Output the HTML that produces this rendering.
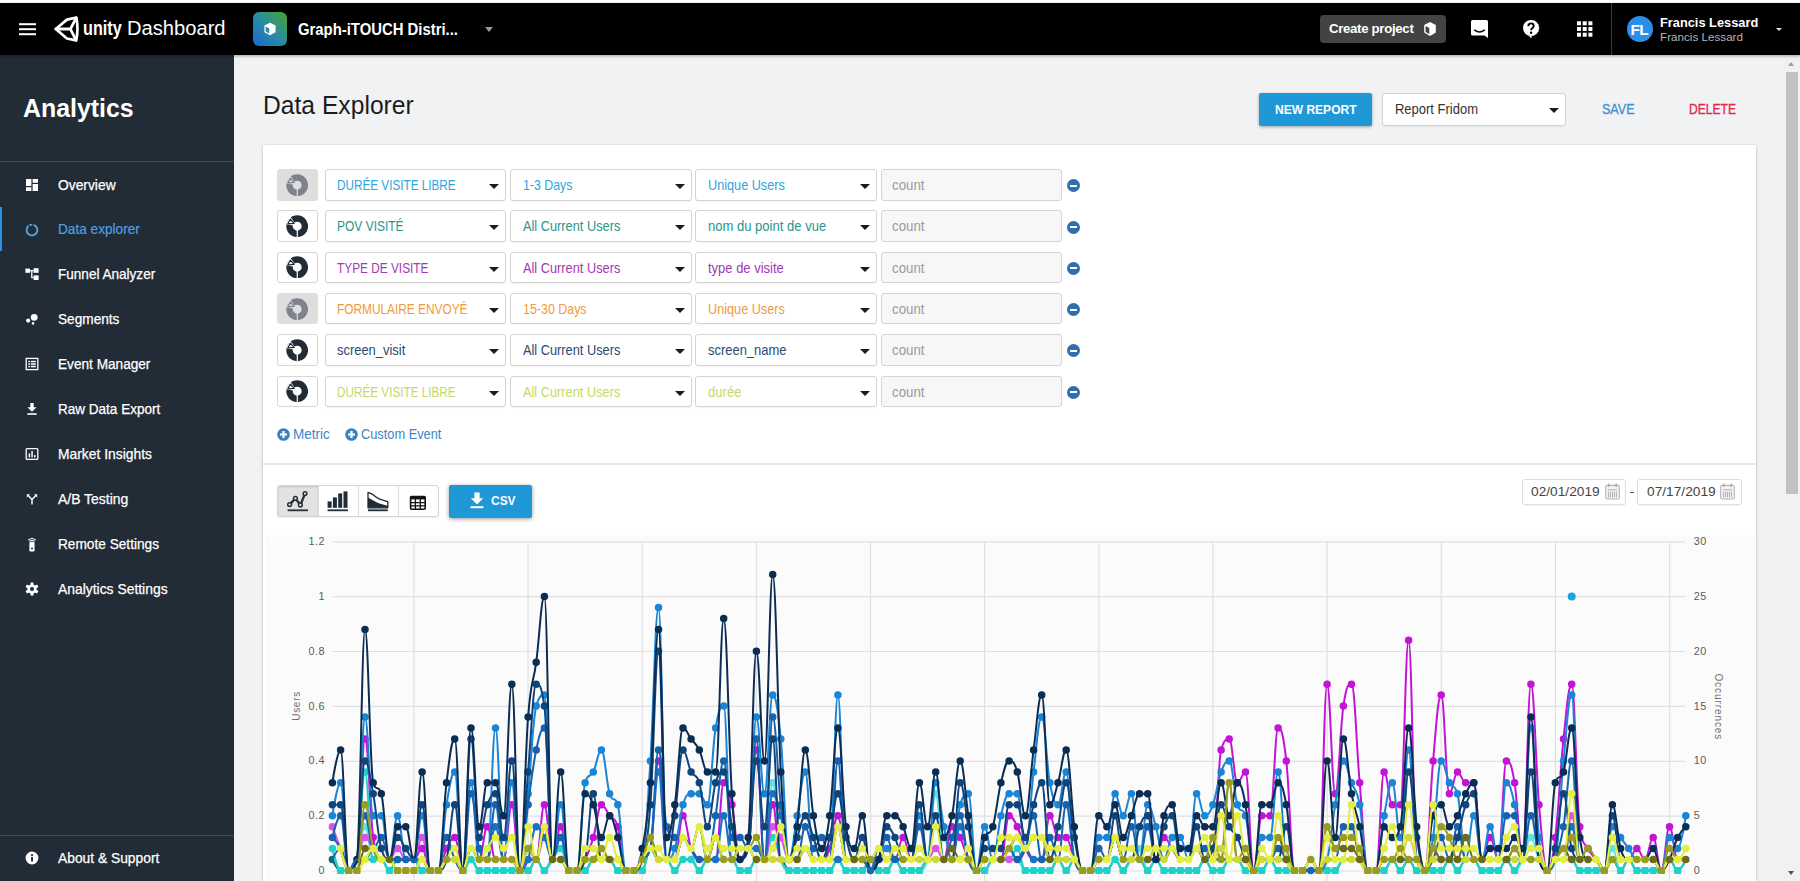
<!DOCTYPE html>
<html lang="en">
<head>
<meta charset="utf-8">
<title>Unity Dashboard - Data Explorer</title>
<style>
*{box-sizing:border-box;margin:0;padding:0}
html,body{width:1800px;height:881px;overflow:hidden;background:#f1f2f4;font-family:"Liberation Sans",sans-serif;}
body{position:relative;color:#212121}
.abs{position:absolute}
/* top */
#topstrip{left:0;top:0;width:1800px;height:3px;background:#fff}
#header{left:0;top:2.5px;width:1800px;height:52.5px;background:#000;box-shadow:0 1px 3px rgba(0,0,0,.35)}
#header .t{position:absolute;color:#fff;white-space:nowrap}
/* sidebar */
#sidebar{left:0;top:55px;width:234px;height:826px;background:#222c37}
#sidebar .item{position:absolute;left:58px;color:#fff;font-size:14.3px;white-space:nowrap;line-height:16px;-webkit-text-stroke:.25px #fff}
#sidebar .ico{position:absolute;left:24px;width:16px;height:16px}
#sidebar .hr{position:absolute;left:0;width:234px;height:1px;background:#3e4853}
/* main */
.card{left:263px;top:145px;width:1493px;height:760px;background:#fff;box-shadow:0 1px 3px rgba(0,0,0,.22),0 0 1px rgba(0,0,0,.12)}
.sel{position:absolute;height:32px;border:1px solid #d4d4d4;border-radius:3px;background:#fff;font-size:14.4px;line-height:30px;padding-left:12px;white-space:nowrap;box-shadow:0 1px 1px rgba(0,0,0,.05)}
.sel:after{content:"";position:absolute;right:6px;top:14px;border-left:5px solid transparent;border-right:5px solid transparent;border-top:5px solid #1c1c1c}
.cnt{position:absolute;height:32px;width:181px;left:880px;border:1px solid #d4d4d4;border-radius:3px;background:#f7f7f7;font-size:14.4px;line-height:30px;padding-left:12px;color:#9a9a9a}
.ibox{position:absolute;left:277px;width:41px;height:32px;border:1px solid #d6d6d6;border-radius:3px;background:#fff}
.ibox.off{background:#dedede;border-color:#dedede}
.minus{position:absolute;left:1066px;width:13px;height:13px;border-radius:50%;background:#2f6fb0}
.minus:after{content:"";position:absolute;left:3px;top:5.5px;width:7px;height:2px;background:#fff}
.ax{font-family:"Liberation Sans",sans-serif;font-size:10.8px;fill:#5a5a5a;letter-spacing:.5px}
</style>
</head>
<body>
<div class="abs" style="left:263px;top:89px;font-size:25.4px;line-height:32px;color:#1c1c1c;white-space:nowrap"><span style="display:inline-block;transform:scaleX(0.971);transform-origin:0 0">Data Explorer</span></div>
<div class="abs" style="left:1259px;top:93px;width:113px;height:33px;background:#1f98d8;border-radius:2px;box-shadow:0 1px 3px rgba(0,0,0,.35)"></div>
<div class="abs" style="left:1274.5px;top:101.7px;font-size:13.6px;line-height:16px;font-weight:bold;color:#fff;white-space:nowrap"><span style="display:inline-block;transform:scaleX(0.885);transform-origin:0 0">NEW REPORT</span></div>
<div class="sel" style="left:1382px;top:93px;width:183.5px;height:33px;line-height:31px;color:#333;padding-left:11.5px;font-size:14.2px"><span style="display:inline-block;transform:scaleX(0.915);transform-origin:0 0">Report Fridom</span></div>
<div class="abs" style="left:1601.5px;top:102px;font-size:13.8px;line-height:16px;color:#3d8fd1;white-space:nowrap;-webkit-text-stroke:.3px #3d8fd1"><span style="display:inline-block;transform:scaleX(0.908);transform-origin:0 0">SAVE</span></div>
<div class="abs" style="left:1689px;top:102px;font-size:13.8px;line-height:16px;color:#e0284f;white-space:nowrap;-webkit-text-stroke:.3px #e0284f"><span style="display:inline-block;transform:scaleX(0.876);transform-origin:0 0">DELETE</span></div>
<div class="abs card"></div>
<div class="ibox off" style="top:169.2px;height:31.4px"><svg style="position:absolute;left:7.8px;top:3.5px" width="22.4" height="22.4" viewBox="0 0 23 23"><circle cx="11.5" cy="11.5" r="7.9" fill="none" stroke="#7d838b" stroke-width="6.6"/><path d="M11.5 11.5 L0 9.6 L4.2 1.2 Z" fill="#dedede"/><path d="M1.9 9.0 L4.5 4.4 L8.4 8.6 Z" fill="none" stroke="#7d838b" stroke-width="1.3" stroke-linejoin="round"/><rect x="11" y="15" width="1.2" height="8" fill="#dedede"/></svg></div>
<div class="sel" style="left:324.5px;top:169.2px;width:181.5px;height:31.4px;line-height:30.4px;color:#2fa4dd;padding-left:11.3px"><span style="display:inline-block;transform:scaleX(0.815);transform-origin:0 0">DURÉE VISITE LIBRE</span></div>
<div class="sel" style="left:510.3px;top:169.2px;width:181.3px;height:31.4px;line-height:30.4px;color:#2fa4dd;padding-left:11.3px"><span style="display:inline-block;transform:scaleX(0.858);transform-origin:0 0">1-3 Days</span></div>
<div class="sel" style="left:695.3px;top:169.2px;width:181.3px;height:31.4px;line-height:30.4px;color:#2fa4dd;padding-left:11.3px"><span style="display:inline-block;transform:scaleX(0.881);transform-origin:0 0">Unique Users</span></div>
<div class="cnt" style="left:880.5px;top:169.2px;height:31.4px;line-height:30.4px;width:181.3px;padding-left:10.6px"><span style="display:inline-block;transform:scaleX(0.923);transform-origin:0 0">count</span></div>
<div class="minus" style="left:1066.6px;top:179.3px"></div>
<div class="ibox" style="top:210.4px;height:31.4px"><svg style="position:absolute;left:7.8px;top:3.5px" width="22.4" height="22.4" viewBox="0 0 23 23"><circle cx="11.5" cy="11.5" r="7.9" fill="none" stroke="#222c37" stroke-width="6.6"/><path d="M11.5 11.5 L0 9.6 L4.2 1.2 Z" fill="#fff"/><path d="M1.9 9.0 L4.5 4.4 L8.4 8.6 Z" fill="none" stroke="#222c37" stroke-width="1.3" stroke-linejoin="round"/><rect x="11" y="15" width="1.2" height="8" fill="#fff"/></svg></div>
<div class="sel" style="left:324.5px;top:210.4px;width:181.5px;height:31.4px;line-height:30.4px;color:#2b958a;padding-left:11.3px"><span style="display:inline-block;transform:scaleX(0.833);transform-origin:0 0">POV VISITÉ</span></div>
<div class="sel" style="left:510.3px;top:210.4px;width:181.3px;height:31.4px;line-height:30.4px;color:#2b958a;padding-left:11.3px"><span style="display:inline-block;transform:scaleX(0.888);transform-origin:0 0">All Current Users</span></div>
<div class="sel" style="left:695.3px;top:210.4px;width:181.3px;height:31.4px;line-height:30.4px;color:#2b958a;padding-left:11.3px"><span style="display:inline-block;transform:scaleX(0.906);transform-origin:0 0">nom du point de vue</span></div>
<div class="cnt" style="left:880.5px;top:210.4px;height:31.4px;line-height:30.4px;width:181.3px;padding-left:10.6px"><span style="display:inline-block;transform:scaleX(0.923);transform-origin:0 0">count</span></div>
<div class="minus" style="left:1066.6px;top:220.5px"></div>
<div class="ibox" style="top:251.7px;height:31.4px"><svg style="position:absolute;left:7.8px;top:3.5px" width="22.4" height="22.4" viewBox="0 0 23 23"><circle cx="11.5" cy="11.5" r="7.9" fill="none" stroke="#222c37" stroke-width="6.6"/><path d="M11.5 11.5 L0 9.6 L4.2 1.2 Z" fill="#fff"/><path d="M1.9 9.0 L4.5 4.4 L8.4 8.6 Z" fill="none" stroke="#222c37" stroke-width="1.3" stroke-linejoin="round"/><rect x="11" y="15" width="1.2" height="8" fill="#fff"/></svg></div>
<div class="sel" style="left:324.5px;top:251.7px;width:181.5px;height:31.4px;line-height:30.4px;color:#a238b6;padding-left:11.3px"><span style="display:inline-block;transform:scaleX(0.823);transform-origin:0 0">TYPE DE VISITE</span></div>
<div class="sel" style="left:510.3px;top:251.7px;width:181.3px;height:31.4px;line-height:30.4px;color:#a238b6;padding-left:11.3px"><span style="display:inline-block;transform:scaleX(0.888);transform-origin:0 0">All Current Users</span></div>
<div class="sel" style="left:695.3px;top:251.7px;width:181.3px;height:31.4px;line-height:30.4px;color:#a238b6;padding-left:11.3px"><span style="display:inline-block;transform:scaleX(0.902);transform-origin:0 0">type de visite</span></div>
<div class="cnt" style="left:880.5px;top:251.7px;height:31.4px;line-height:30.4px;width:181.3px;padding-left:10.6px"><span style="display:inline-block;transform:scaleX(0.923);transform-origin:0 0">count</span></div>
<div class="minus" style="left:1066.6px;top:261.8px"></div>
<div class="ibox off" style="top:293.0px;height:31.4px"><svg style="position:absolute;left:7.8px;top:3.5px" width="22.4" height="22.4" viewBox="0 0 23 23"><circle cx="11.5" cy="11.5" r="7.9" fill="none" stroke="#7d838b" stroke-width="6.6"/><path d="M11.5 11.5 L0 9.6 L4.2 1.2 Z" fill="#dedede"/><path d="M1.9 9.0 L4.5 4.4 L8.4 8.6 Z" fill="none" stroke="#7d838b" stroke-width="1.3" stroke-linejoin="round"/><rect x="11" y="15" width="1.2" height="8" fill="#dedede"/></svg></div>
<div class="sel" style="left:324.5px;top:293.0px;width:181.5px;height:31.4px;line-height:30.4px;color:#f09a3e;padding-left:11.3px"><span style="display:inline-block;transform:scaleX(0.824);transform-origin:0 0">FORMULAIRE ENVOYÉ</span></div>
<div class="sel" style="left:510.3px;top:293.0px;width:181.3px;height:31.4px;line-height:30.4px;color:#f09a3e;padding-left:11.3px"><span style="display:inline-block;transform:scaleX(0.864);transform-origin:0 0">15-30 Days</span></div>
<div class="sel" style="left:695.3px;top:293.0px;width:181.3px;height:31.4px;line-height:30.4px;color:#f09a3e;padding-left:11.3px"><span style="display:inline-block;transform:scaleX(0.881);transform-origin:0 0">Unique Users</span></div>
<div class="cnt" style="left:880.5px;top:293.0px;height:31.4px;line-height:30.4px;width:181.3px;padding-left:10.6px"><span style="display:inline-block;transform:scaleX(0.923);transform-origin:0 0">count</span></div>
<div class="minus" style="left:1066.6px;top:303.1px"></div>
<div class="ibox" style="top:334.2px;height:31.4px"><svg style="position:absolute;left:7.8px;top:3.5px" width="22.4" height="22.4" viewBox="0 0 23 23"><circle cx="11.5" cy="11.5" r="7.9" fill="none" stroke="#222c37" stroke-width="6.6"/><path d="M11.5 11.5 L0 9.6 L4.2 1.2 Z" fill="#fff"/><path d="M1.9 9.0 L4.5 4.4 L8.4 8.6 Z" fill="none" stroke="#222c37" stroke-width="1.3" stroke-linejoin="round"/><rect x="11" y="15" width="1.2" height="8" fill="#fff"/></svg></div>
<div class="sel" style="left:324.5px;top:334.2px;width:181.5px;height:31.4px;line-height:30.4px;color:#2b4a70;padding-left:11.3px"><span style="display:inline-block;transform:scaleX(0.898);transform-origin:0 0">screen_visit</span></div>
<div class="sel" style="left:510.3px;top:334.2px;width:181.3px;height:31.4px;line-height:30.4px;color:#2b4a70;padding-left:11.3px"><span style="display:inline-block;transform:scaleX(0.888);transform-origin:0 0">All Current Users</span></div>
<div class="sel" style="left:695.3px;top:334.2px;width:181.3px;height:31.4px;line-height:30.4px;color:#2b4a70;padding-left:11.3px"><span style="display:inline-block;transform:scaleX(0.900);transform-origin:0 0">screen_name</span></div>
<div class="cnt" style="left:880.5px;top:334.2px;height:31.4px;line-height:30.4px;width:181.3px;padding-left:10.6px"><span style="display:inline-block;transform:scaleX(0.923);transform-origin:0 0">count</span></div>
<div class="minus" style="left:1066.6px;top:344.3px"></div>
<div class="ibox" style="top:375.5px;height:31.4px"><svg style="position:absolute;left:7.8px;top:3.5px" width="22.4" height="22.4" viewBox="0 0 23 23"><circle cx="11.5" cy="11.5" r="7.9" fill="none" stroke="#222c37" stroke-width="6.6"/><path d="M11.5 11.5 L0 9.6 L4.2 1.2 Z" fill="#fff"/><path d="M1.9 9.0 L4.5 4.4 L8.4 8.6 Z" fill="none" stroke="#222c37" stroke-width="1.3" stroke-linejoin="round"/><rect x="11" y="15" width="1.2" height="8" fill="#fff"/></svg></div>
<div class="sel" style="left:324.5px;top:375.5px;width:181.5px;height:31.4px;line-height:30.4px;color:#c6d962;padding-left:11.3px"><span style="display:inline-block;transform:scaleX(0.815);transform-origin:0 0">DURÉE VISITE LIBRE</span></div>
<div class="sel" style="left:510.3px;top:375.5px;width:181.3px;height:31.4px;line-height:30.4px;color:#c6d962;padding-left:11.3px"><span style="display:inline-block;transform:scaleX(0.888);transform-origin:0 0">All Current Users</span></div>
<div class="sel" style="left:695.3px;top:375.5px;width:181.3px;height:31.4px;line-height:30.4px;color:#c6d962;padding-left:11.3px"><span style="display:inline-block;transform:scaleX(0.910);transform-origin:0 0">durée</span></div>
<div class="cnt" style="left:880.5px;top:375.5px;height:31.4px;line-height:30.4px;width:181.3px;padding-left:10.6px"><span style="display:inline-block;transform:scaleX(0.923);transform-origin:0 0">count</span></div>
<div class="minus" style="left:1066.6px;top:385.6px"></div>
<svg class="abs" style="left:276.8px;top:428px" width="13" height="13" viewBox="0 0 13 13"><circle cx="6.5" cy="6.5" r="6.3" fill="#3a7fc2"/><rect x="3" y="5.4" width="7" height="2.2" fill="#fff"/><rect x="5.4" y="3" width="2.2" height="7" fill="#fff"/></svg>
<div class="abs" style="left:293px;top:426px;font-size:14px;line-height:17px;color:#3d86c8;white-space:nowrap"><span style="display:inline-block;transform:scaleX(0.963);transform-origin:0 0">Metric</span></div>
<svg class="abs" style="left:345.0px;top:428px" width="13" height="13" viewBox="0 0 13 13"><circle cx="6.5" cy="6.5" r="6.3" fill="#3a7fc2"/><rect x="3" y="5.4" width="7" height="2.2" fill="#fff"/><rect x="5.4" y="3" width="2.2" height="7" fill="#fff"/></svg>
<div class="abs" style="left:361.3px;top:426px;font-size:14px;line-height:17px;color:#3d86c8;white-space:nowrap"><span style="display:inline-block;transform:scaleX(0.914);transform-origin:0 0">Custom Event</span></div>
<div class="abs" style="left:263px;top:463px;width:1493px;height:2px;background:#e6e6e6"></div>
<div class="abs" style="left:277px;top:485px;width:161.5px;height:32px;border:1px solid #d4d4d4;border-radius:3px;background:#fff;box-shadow:0 1px 1px rgba(0,0,0,.06)"></div>
<div class="abs" style="left:278px;top:486px;width:39.5px;height:30px;background:#e2e2e2;border-radius:2px 0 0 2px;box-shadow:inset 0 1px 2px rgba(0,0,0,.12)"></div>
<div class="abs" style="left:317.5px;top:486px;width:1px;height:30px;background:#dcdcdc"></div>
<div class="abs" style="left:357.5px;top:486px;width:1px;height:30px;background:#dcdcdc"></div>
<div class="abs" style="left:398.0px;top:486px;width:1px;height:30px;background:#dcdcdc"></div>
<svg class="abs" style="left:286px;top:489px" width="24" height="24" viewBox="0 0 24 24"><path d="M3.6 15.6 L9.4 9.4 L14.4 16 L19 4.6" fill="none" stroke="#2b2f36" stroke-width="2.3" stroke-linejoin="round"/><g fill="#e2e2e2" stroke="#2b2f36" stroke-width="1.5"><circle cx="3.6" cy="15.6" r="1.9"/><circle cx="9.4" cy="9.4" r="1.9"/><circle cx="14.4" cy="16" r="1.9"/><circle cx="19" cy="4.6" r="1.9"/></g><rect x="1.6" y="20.4" width="20.4" height="1.8" fill="#2b2f36"/></svg>
<svg class="abs" style="left:326px;top:489px" width="24" height="24" viewBox="0 0 24 24"><g fill="#222c37"><rect x="1.6" y="12.4" width="4" height="6.4"/><rect x="6.9" y="8.4" width="4" height="10.4"/><rect x="12.2" y="4.4" width="4" height="14.4"/><rect x="17.5" y="2.4" width="4" height="16.4"/><rect x="1.6" y="20.4" width="20.4" height="1.8"/></g></svg>
<svg class="abs" style="left:366px;top:489px" width="24" height="24" viewBox="0 0 24 24"><path d="M2 3.4 C6 4.6 8 6.2 10.4 8.2 C13.4 10.8 17.8 11 21.8 12.6 V18.8 H2 Z" fill="none" stroke="#222c37" stroke-width="1.3" stroke-linejoin="round"/><path d="M2 8.4 C5 10 8 11.8 11 13.6 C14 15.2 18 15.6 21.8 16.8 V18.8 H2 Z" fill="#222c37"/><rect x="2" y="20.4" width="19.8" height="1.8" fill="#222c37"/></svg>
<svg class="abs" style="left:408px;top:494px" width="20" height="18" viewBox="0 0 20 18"><rect x="2.6" y="2.6" width="14.6" height="12.6" rx="1" fill="#fff" stroke="#111" stroke-width="1.6"/><rect x="2.6" y="2.6" width="14.6" height="2.8" fill="#111"/><path d="M2.6 8.6 H17.2 M2.6 11.9 H17.2 M7.4 5 V15.2 M12.3 5 V15.2" stroke="#111" stroke-width="1.3" fill="none"/></svg>
<div class="abs" style="left:449px;top:484.6px;width:82.6px;height:33px;background:#1f98d8;border-radius:2px;box-shadow:0 1px 4px rgba(0,0,0,.4)"></div>
<svg class="abs" style="left:469.5px;top:492px" width="14" height="17" viewBox="0 0 14 17"><path d="M4.4 0.6 H9.6 V6.2 H13.2 L7 12.4 L0.8 6.2 H4.4 Z" fill="#fff"/><rect x="0.6" y="14.2" width="12.8" height="2" fill="#fff"/></svg>
<div class="abs" style="left:491.3px;top:493px;font-size:13.6px;line-height:16px;font-weight:bold;color:#fff;white-space:nowrap"><span style="display:inline-block;transform:scaleX(0.880);transform-origin:0 0">CSV</span></div>
<div class="abs" style="left:1522.0px;top:479.2px;width:104.3px;height:25.6px;border:1px solid #dedede;border-radius:3px;background:#fff;box-shadow:0 1px 1px rgba(0,0,0,.05)"></div>
<div class="abs" style="left:1531.3px;top:484px;font-size:13.2px;line-height:16px;color:#444;white-space:nowrap"><span style="display:inline-block;transform:scaleX(1.041);transform-origin:0 0">02/01/2019</span></div>
<svg class="abs" style="left:1605.3px;top:483px" width="15" height="17" viewBox="0 0 15 17"><rect x="0.7" y="2.4" width="13.6" height="13.6" rx="1.6" fill="#f3f3f3" stroke="#b4b4b4" stroke-width="1.1"/><path d="M3.8 0.6 V4 M11.2 0.6 V4" stroke="#a8a8a8" stroke-width="1.3"/><path d="M3 6.8 H12 M3.6 8.6 V14.4 M5.6 8.6 V14.4 M7.5 8.6 V14.4 M9.4 8.6 V14.4 M11.4 8.6 V14.4" stroke="#b0b0b0" stroke-width="1" fill="none"/></svg>
<div class="abs" style="left:1637.3px;top:479.2px;width:104.3px;height:25.6px;border:1px solid #dedede;border-radius:3px;background:#fff;box-shadow:0 1px 1px rgba(0,0,0,.05)"></div>
<div class="abs" style="left:1646.6px;top:484px;font-size:13.2px;line-height:16px;color:#444;white-space:nowrap"><span style="display:inline-block;transform:scaleX(1.041);transform-origin:0 0">07/17/2019</span></div>
<svg class="abs" style="left:1720.4px;top:483px" width="15" height="17" viewBox="0 0 15 17"><rect x="0.7" y="2.4" width="13.6" height="13.6" rx="1.6" fill="#f3f3f3" stroke="#b4b4b4" stroke-width="1.1"/><path d="M3.8 0.6 V4 M11.2 0.6 V4" stroke="#a8a8a8" stroke-width="1.3"/><path d="M3 6.8 H12 M3.6 8.6 V14.4 M5.6 8.6 V14.4 M7.5 8.6 V14.4 M9.4 8.6 V14.4 M11.4 8.6 V14.4" stroke="#b0b0b0" stroke-width="1" fill="none"/></svg>
<div class="abs" style="left:1629.8px;top:491.6px;width:3.8px;height:1.4px;background:#555"></div>
<div class="abs" style="left:264.5px;top:533.5px;width:1490px;height:348px;background:linear-gradient(#fff,#fbfbfb 3px,#fbfbfb)"></div>
<svg class="abs" style="left:0;top:0" width="1800" height="881" viewBox="0 0 1800 881">
<path d="M332.5 871.0 H1685 M332.5 816.1 H1685 M332.5 761.3 H1685 M332.5 706.4 H1685 M332.5 651.5 H1685 M332.5 596.7 H1685 M332.5 541.8 H1685 M413.9 541.5 V881 M528.0 541.5 V881 M642.2 541.5 V881 M756.4 541.5 V881 M870.5 541.5 V881 M984.6 541.5 V881 M1098.8 541.5 V881 M1213.0 541.5 V881 M1327.1 541.5 V881 M1441.2 541.5 V881 M1555.4 541.5 V881 M1669.6 541.5 V881" stroke="#e0e0e3" stroke-width="1.2" fill="none"/>
<text class="ax" x="325" y="873.9" text-anchor="end">0</text>
<text class="ax" x="325" y="819.1" text-anchor="end">0.2</text>
<text class="ax" x="325" y="764.3" text-anchor="end">0.4</text>
<text class="ax" x="325" y="709.5" text-anchor="end">0.6</text>
<text class="ax" x="325" y="654.7" text-anchor="end">0.8</text>
<text class="ax" x="325" y="599.9" text-anchor="end">1</text>
<text class="ax" x="325" y="545.1" text-anchor="end">1.2</text>
<text class="ax" x="1693.8" y="873.9">0</text>
<text class="ax" x="1693.8" y="819.1">5</text>
<text class="ax" x="1693.8" y="764.3">10</text>
<text class="ax" x="1693.8" y="709.5">15</text>
<text class="ax" x="1693.8" y="654.7">20</text>
<text class="ax" x="1693.8" y="599.9">25</text>
<text class="ax" x="1693.8" y="545.1">30</text>
<text class="ax" transform="translate(300 720.8) rotate(-90)" textLength="29.5" style="fill:#707070;font-size:10px">Users</text>
<text class="ax" transform="translate(1714.8 673.4) rotate(90)" textLength="66.4" style="fill:#707070;font-size:10px">Occurrences</text>
<path d="M332.4 859.5C332.4 859.5 337.3 870.5 340.6 870.5H348.7C352.0 870.5 353.6 859.5 356.9 859.5H365.0H373.2H381.3C384.6 859.5 386.2 870.5 389.5 870.5C392.7 870.5 394.4 859.5 397.6 859.5H405.8H413.9C417.2 859.5 418.8 870.5 422.1 870.5H430.2H438.4C441.7 870.5 443.3 859.5 446.5 859.5H454.7C458.0 859.5 459.6 870.5 462.8 870.5C466.1 870.5 467.7 859.5 471.0 859.5C474.3 859.5 475.9 870.5 479.2 870.5H487.3H495.5H503.6H511.8H519.9H528.1C531.3 870.5 533.0 859.5 536.2 859.5C539.5 859.5 541.1 870.5 544.4 870.5C547.6 870.5 549.3 859.5 552.5 859.5H560.7C563.9 859.5 565.6 870.5 568.8 870.5H577.0H585.1C588.4 870.5 590.0 859.5 593.3 859.5H601.4H609.6C612.9 859.5 614.5 870.5 617.8 870.5H625.9H634.1H642.2C645.5 870.5 647.1 848.6 650.4 848.6C653.6 848.6 655.3 859.5 658.5 859.5H666.7C669.9 859.5 671.6 870.5 674.8 870.5C678.1 870.5 679.7 859.5 683.0 859.5H691.1C694.4 859.5 696.0 870.5 699.3 870.5C702.5 870.5 704.2 859.5 707.4 859.5H715.6H723.7H731.9C735.2 859.5 736.8 870.5 740.0 870.5H748.2C751.5 870.5 753.1 859.5 756.4 859.5H764.5H772.7H780.8C784.1 859.5 785.7 870.5 789.0 870.5H797.1H805.3H813.4H821.6H829.7C833.0 870.5 834.6 859.5 837.9 859.5C841.1 859.5 842.8 870.5 846.0 870.5H854.2H862.3C865.6 870.5 867.2 859.5 870.5 859.5C873.8 859.5 875.4 870.5 878.7 870.5H886.8C890.1 870.5 891.7 859.5 895.0 859.5C898.2 859.5 899.8 870.5 903.1 870.5H911.3H919.4C922.7 870.5 924.3 859.5 927.6 859.5H935.7H943.9H952.0H960.2H968.3C971.6 859.5 973.2 870.5 976.5 870.5H984.6C987.9 870.5 989.5 859.5 992.8 859.5H1000.9H1009.1H1017.3C1020.5 859.5 1022.1 870.5 1025.4 870.5H1033.6H1041.7H1049.9C1053.1 870.5 1054.8 859.5 1058.0 859.5C1061.3 859.5 1062.9 870.5 1066.2 870.5C1069.4 870.5 1071.1 859.5 1074.3 859.5C1077.6 859.5 1079.2 870.5 1082.5 870.5H1090.6H1098.8H1106.9C1110.2 870.5 1111.8 859.5 1115.1 859.5C1118.3 859.5 1120.0 870.5 1123.2 870.5C1126.5 870.5 1128.1 859.5 1131.4 859.5H1139.5C1142.8 859.5 1144.4 870.5 1147.7 870.5C1151.0 870.5 1152.6 859.5 1155.9 859.5C1159.1 859.5 1160.7 870.5 1164.0 870.5H1172.2H1180.3H1188.5H1196.6C1199.9 870.5 1201.5 859.5 1204.8 859.5C1208.0 859.5 1209.7 870.5 1212.9 870.5H1221.1C1224.3 870.5 1226.0 859.5 1229.2 859.5H1237.4C1240.6 859.5 1242.3 870.5 1245.5 870.5H1253.7H1261.8C1265.1 870.5 1266.7 859.5 1270.0 859.5C1273.3 859.5 1274.9 870.5 1278.1 870.5H1286.3H1294.5H1302.6C1305.9 870.5 1307.5 859.5 1310.8 859.5C1314.0 859.5 1315.7 870.5 1318.9 870.5H1327.1H1335.2C1338.5 870.5 1340.1 859.5 1343.4 859.5H1351.5H1359.7C1362.9 859.5 1364.6 870.5 1367.8 870.5H1376.0H1384.1C1387.4 870.5 1389.0 859.5 1392.3 859.5C1395.6 859.5 1397.2 870.5 1400.4 870.5C1403.7 870.5 1405.3 859.5 1408.6 859.5C1411.9 859.5 1413.5 870.5 1416.7 870.5H1424.9H1433.1H1441.2C1444.5 870.5 1446.1 859.5 1449.4 859.5C1452.6 859.5 1454.3 870.5 1457.5 870.5C1460.8 870.5 1462.4 859.5 1465.7 859.5H1473.8C1477.1 859.5 1478.7 870.5 1482.0 870.5H1490.1H1498.3C1501.5 870.5 1503.2 859.5 1506.4 859.5C1509.7 859.5 1511.3 870.5 1514.6 870.5C1517.8 870.5 1519.5 859.5 1522.7 859.5H1530.9H1539.0C1542.3 859.5 1543.9 870.5 1547.2 870.5C1550.5 870.5 1552.1 859.5 1555.3 859.5H1563.5H1571.7C1574.9 859.5 1576.5 870.5 1579.8 870.5H1588.0H1596.1H1604.3C1607.5 870.5 1609.2 859.5 1612.4 859.5C1615.7 859.5 1617.3 870.5 1620.6 870.5C1623.8 870.5 1625.5 859.5 1628.7 859.5C1632.0 859.5 1633.6 870.5 1636.9 870.5H1645.0H1653.2H1661.3C1664.6 870.5 1666.2 859.5 1669.5 859.5C1672.8 859.5 1674.4 870.5 1677.6 870.5C1680.9 870.5 1685.8 859.5 1685.8 859.5" fill="none" stroke="#0e6b66" stroke-width="2" stroke-linejoin="round" stroke-linecap="round"/>
<path d="M332.4 859.5h0" fill="none" stroke="#0e6b66" stroke-width="7.5" stroke-linecap="round"/>
<path d="M332.4 848.6C332.4 848.6 337.3 870.5 340.6 870.5H348.7C352.0 870.5 353.6 868.3 356.9 859.5C360.1 850.8 361.8 826.7 365.0 826.7C368.3 826.7 369.9 859.5 373.2 859.5H381.3C384.6 859.5 386.2 870.5 389.5 870.5C392.7 870.5 394.4 859.5 397.6 859.5H405.8H413.9C417.2 859.5 418.8 870.5 422.1 870.5H430.2H438.4C441.7 870.5 443.3 859.5 446.5 859.5H454.7C458.0 859.5 459.6 870.5 462.8 870.5C466.1 870.5 467.7 859.5 471.0 859.5C474.3 859.5 475.9 870.5 479.2 870.5H487.3H495.5H503.6H511.8H519.9H528.1C531.3 870.5 533.0 859.5 536.2 859.5C539.5 859.5 541.1 870.5 544.4 870.5C547.6 870.5 549.3 859.5 552.5 859.5H560.7C563.9 859.5 565.6 870.5 568.8 870.5H577.0H585.1C588.4 870.5 590.0 859.5 593.3 859.5H601.4H609.6C612.9 859.5 614.5 870.5 617.8 870.5H625.9H634.1H642.2C645.5 870.5 647.1 848.6 650.4 848.6C653.6 848.6 655.3 859.5 658.5 859.5H666.7C669.9 859.5 671.6 870.5 674.8 870.5C678.1 870.5 679.7 859.5 683.0 859.5H691.1C694.4 859.5 696.0 870.5 699.3 870.5C702.5 870.5 704.2 859.5 707.4 859.5H715.6H723.7H731.9C735.2 859.5 736.8 870.5 740.0 870.5H748.2C751.5 870.5 753.1 859.5 756.4 859.5H764.5C767.8 859.5 769.4 782.8 772.7 782.8C775.9 782.8 777.6 848.6 780.8 859.5C784.1 870.5 785.7 870.5 789.0 870.5H797.1H805.3H813.4H821.6H829.7C833.0 870.5 834.6 859.5 837.9 859.5C841.1 859.5 842.8 870.5 846.0 870.5H854.2H862.3C865.6 870.5 867.2 859.5 870.5 859.5C873.8 859.5 875.4 870.5 878.7 870.5H886.8C890.1 870.5 891.7 859.5 895.0 859.5C898.2 859.5 899.8 870.5 903.1 870.5H911.3H919.4C922.7 870.5 924.3 870.5 927.6 859.5C930.8 848.6 932.5 793.8 935.7 793.8C939.0 793.8 940.6 859.5 943.9 859.5H952.0H960.2H968.3C971.6 859.5 973.2 870.5 976.5 870.5H984.6C987.9 870.5 989.5 859.5 992.8 859.5H1000.9H1009.1H1017.3C1020.5 859.5 1022.1 870.5 1025.4 870.5H1033.6H1041.7H1049.9C1053.1 870.5 1054.8 859.5 1058.0 859.5C1061.3 859.5 1062.9 870.5 1066.2 870.5C1069.4 870.5 1071.1 859.5 1074.3 859.5C1077.6 859.5 1079.2 870.5 1082.5 870.5H1090.6H1098.8H1106.9C1110.2 870.5 1111.8 859.5 1115.1 859.5C1118.3 859.5 1120.0 870.5 1123.2 870.5C1126.5 870.5 1128.1 863.9 1131.4 859.5C1134.7 855.2 1136.3 848.6 1139.5 848.6C1142.8 848.6 1144.4 870.5 1147.7 870.5C1151.0 870.5 1152.6 859.5 1155.9 859.5C1159.1 859.5 1160.7 870.5 1164.0 870.5H1172.2H1180.3H1188.5H1196.6C1199.9 870.5 1201.5 859.5 1204.8 859.5C1208.0 859.5 1209.7 870.5 1212.9 870.5H1221.1C1224.3 870.5 1226.0 859.5 1229.2 859.5H1237.4C1240.6 859.5 1242.3 870.5 1245.5 870.5H1253.7H1261.8C1265.1 870.5 1266.7 859.5 1270.0 859.5C1273.3 859.5 1274.9 870.5 1278.1 870.5H1286.3H1294.5H1302.6C1305.9 870.5 1307.5 859.5 1310.8 859.5C1314.0 859.5 1315.7 870.5 1318.9 870.5H1327.1H1335.2C1338.5 870.5 1340.1 859.5 1343.4 859.5H1351.5H1359.7C1362.9 859.5 1364.6 870.5 1367.8 870.5H1376.0H1384.1C1387.4 870.5 1389.0 859.5 1392.3 859.5C1395.6 859.5 1397.2 870.5 1400.4 870.5C1403.7 870.5 1405.3 859.5 1408.6 859.5C1411.9 859.5 1413.5 870.5 1416.7 870.5H1424.9H1433.1H1441.2C1444.5 870.5 1446.1 859.5 1449.4 859.5C1452.6 859.5 1454.3 870.5 1457.5 870.5C1460.8 870.5 1462.4 859.5 1465.7 859.5H1473.8C1477.1 859.5 1478.7 870.5 1482.0 870.5H1490.1H1498.3C1501.5 870.5 1503.2 859.5 1506.4 859.5C1509.7 859.5 1511.3 870.5 1514.6 870.5C1517.8 870.5 1519.5 866.1 1522.7 859.5C1526.0 853.0 1527.6 837.6 1530.9 837.6C1534.2 837.6 1535.8 853.0 1539.0 859.5C1542.3 866.1 1543.9 870.5 1547.2 870.5C1550.5 870.5 1552.1 859.5 1555.3 859.5H1563.5H1571.7C1574.9 859.5 1576.5 870.5 1579.8 870.5H1588.0H1596.1H1604.3C1607.5 870.5 1609.2 848.6 1612.4 848.6C1615.7 848.6 1617.3 870.5 1620.6 870.5C1623.8 870.5 1625.5 859.5 1628.7 859.5C1632.0 859.5 1633.6 870.5 1636.9 870.5H1645.0H1653.2H1661.3C1664.6 870.5 1666.2 859.5 1669.5 859.5C1672.8 859.5 1674.4 870.5 1677.6 870.5C1680.9 870.5 1685.8 859.5 1685.8 859.5" fill="none" stroke="#5ee3de" stroke-width="2" stroke-linejoin="round" stroke-linecap="round"/>
<path d="M365.0 826.7h0M772.7 782.8h0M935.7 793.8h0M1139.5 848.6h0M1530.9 837.6h0M1612.4 848.6h0" fill="none" stroke="#5ee3de" stroke-width="7.5" stroke-linecap="round"/>
<path d="M332.4 848.6C332.4 848.6 337.3 870.5 340.6 870.5H348.7C352.0 870.5 353.6 870.5 356.9 859.5C360.1 848.6 361.8 771.9 365.0 771.9C368.3 771.9 369.9 859.5 373.2 859.5H381.3C384.6 859.5 386.2 870.5 389.5 870.5C392.7 870.5 394.4 859.5 397.6 859.5H405.8H413.9C417.2 859.5 418.8 870.5 422.1 870.5H430.2H438.4C441.7 870.5 443.3 859.5 446.5 859.5H454.7C458.0 859.5 459.6 870.5 462.8 870.5C466.1 870.5 467.7 859.5 471.0 859.5C474.3 859.5 475.9 870.5 479.2 870.5H487.3H495.5H503.6H511.8H519.9H528.1C531.3 870.5 533.0 859.5 536.2 859.5C539.5 859.5 541.1 870.5 544.4 870.5C547.6 870.5 549.3 863.9 552.5 859.5C555.8 855.2 557.4 848.6 560.7 848.6C563.9 848.6 565.6 870.5 568.8 870.5H577.0H585.1C588.4 870.5 590.0 859.5 593.3 859.5H601.4H609.6C612.9 859.5 614.5 870.5 617.8 870.5H625.9H634.1H642.2C645.5 870.5 647.1 848.6 650.4 848.6C653.6 848.6 655.3 859.5 658.5 859.5H666.7C669.9 859.5 671.6 870.5 674.8 870.5C678.1 870.5 679.7 859.5 683.0 859.5H691.1C694.4 859.5 696.0 870.5 699.3 870.5C702.5 870.5 704.2 859.5 707.4 859.5H715.6H723.7H731.9C735.2 859.5 736.8 870.5 740.0 870.5H748.2C751.5 870.5 753.1 859.5 756.4 859.5H764.5C767.8 859.5 769.4 837.6 772.7 837.6C775.9 837.6 777.6 853.0 780.8 859.5C784.1 866.1 785.7 870.5 789.0 870.5H797.1H805.3H813.4H821.6H829.7C833.0 870.5 834.6 859.5 837.9 859.5C841.1 859.5 842.8 870.5 846.0 870.5H854.2H862.3C865.6 870.5 867.2 859.5 870.5 859.5C873.8 859.5 875.4 870.5 878.7 870.5H886.8C890.1 870.5 891.7 859.5 895.0 859.5C898.2 859.5 899.8 870.5 903.1 870.5H911.3H919.4C922.7 870.5 924.3 859.5 927.6 859.5H935.7H943.9H952.0H960.2H968.3C971.6 859.5 973.2 870.5 976.5 870.5H984.6C987.9 870.5 989.5 859.5 992.8 859.5H1000.9H1009.1C1012.4 859.5 1014.0 848.6 1017.3 848.6C1020.5 848.6 1022.1 870.5 1025.4 870.5H1033.6H1041.7H1049.9C1053.1 870.5 1054.8 859.5 1058.0 859.5C1061.3 859.5 1062.9 870.5 1066.2 870.5C1069.4 870.5 1071.1 859.5 1074.3 859.5C1077.6 859.5 1079.2 870.5 1082.5 870.5H1090.6H1098.8H1106.9C1110.2 870.5 1111.8 859.5 1115.1 859.5C1118.3 859.5 1120.0 870.5 1123.2 870.5C1126.5 870.5 1128.1 859.5 1131.4 859.5H1139.5C1142.8 859.5 1144.4 870.5 1147.7 870.5C1151.0 870.5 1152.6 859.5 1155.9 859.5C1159.1 859.5 1160.7 870.5 1164.0 870.5H1172.2H1180.3H1188.5H1196.6C1199.9 870.5 1201.5 859.5 1204.8 859.5C1208.0 859.5 1209.7 870.5 1212.9 870.5H1221.1C1224.3 870.5 1226.0 859.5 1229.2 859.5H1237.4C1240.6 859.5 1242.3 870.5 1245.5 870.5H1253.7H1261.8C1265.1 870.5 1266.7 859.5 1270.0 859.5C1273.3 859.5 1274.9 870.5 1278.1 870.5H1286.3H1294.5H1302.6C1305.9 870.5 1307.5 859.5 1310.8 859.5C1314.0 859.5 1315.7 870.5 1318.9 870.5H1327.1H1335.2C1338.5 870.5 1340.1 859.5 1343.4 859.5H1351.5H1359.7C1362.9 859.5 1364.6 870.5 1367.8 870.5H1376.0H1384.1C1387.4 870.5 1389.0 859.5 1392.3 859.5C1395.6 859.5 1397.2 870.5 1400.4 870.5C1403.7 870.5 1405.3 859.5 1408.6 859.5C1411.9 859.5 1413.5 870.5 1416.7 870.5H1424.9H1433.1H1441.2C1444.5 870.5 1446.1 859.5 1449.4 859.5C1452.6 859.5 1454.3 870.5 1457.5 870.5C1460.8 870.5 1462.4 859.5 1465.7 859.5H1473.8C1477.1 859.5 1478.7 870.5 1482.0 870.5H1490.1H1498.3C1501.5 870.5 1503.2 859.5 1506.4 859.5C1509.7 859.5 1511.3 870.5 1514.6 870.5C1517.8 870.5 1519.5 859.5 1522.7 859.5H1530.9H1539.0C1542.3 859.5 1543.9 870.5 1547.2 870.5C1550.5 870.5 1552.1 859.5 1555.3 859.5H1563.5H1571.7C1574.9 859.5 1576.5 870.5 1579.8 870.5H1588.0H1596.1H1604.3C1607.5 870.5 1609.2 859.5 1612.4 859.5C1615.7 859.5 1617.3 870.5 1620.6 870.5C1623.8 870.5 1625.5 859.5 1628.7 859.5C1632.0 859.5 1633.6 870.5 1636.9 870.5H1645.0H1653.2H1661.3C1664.6 870.5 1666.2 859.5 1669.5 859.5C1672.8 859.5 1674.4 870.5 1677.6 870.5C1680.9 870.5 1685.8 859.5 1685.8 859.5" fill="none" stroke="#1fd2c9" stroke-width="2" stroke-linejoin="round" stroke-linecap="round"/>
<path d="M332.4 848.6h0M365.0 771.9h0M373.2 859.5h0M471.0 859.5h0M560.7 848.6h0M683.0 859.5h0M691.1 859.5h0M772.7 837.6h0M927.6 859.5h0M1017.3 848.6h0M1115.1 859.5h0" fill="none" stroke="#1fd2c9" stroke-width="7.5" stroke-linecap="round"/>
<path d="M338.4 868.5h4.4v4h-4.4zM346.5 868.5h4.4v4h-4.4zM387.3 868.5h4.4v4h-4.4zM419.9 868.5h4.4v4h-4.4zM428.0 868.5h4.4v4h-4.4zM436.2 868.5h4.4v4h-4.4zM460.6 868.5h4.4v4h-4.4zM477.0 868.5h4.4v4h-4.4zM485.1 868.5h4.4v4h-4.4zM493.3 868.5h4.4v4h-4.4zM501.4 868.5h4.4v4h-4.4zM509.6 868.5h4.4v4h-4.4zM517.7 868.5h4.4v4h-4.4zM525.9 868.5h4.4v4h-4.4zM542.2 868.5h4.4v4h-4.4zM566.6 868.5h4.4v4h-4.4zM574.8 868.5h4.4v4h-4.4zM582.9 868.5h4.4v4h-4.4zM615.6 868.5h4.4v4h-4.4zM623.7 868.5h4.4v4h-4.4zM631.9 868.5h4.4v4h-4.4zM640.0 868.5h4.4v4h-4.4zM672.6 868.5h4.4v4h-4.4zM697.1 868.5h4.4v4h-4.4zM737.8 868.5h4.4v4h-4.4zM746.0 868.5h4.4v4h-4.4zM786.8 868.5h4.4v4h-4.4zM794.9 868.5h4.4v4h-4.4zM803.1 868.5h4.4v4h-4.4zM811.2 868.5h4.4v4h-4.4zM819.4 868.5h4.4v4h-4.4zM827.5 868.5h4.4v4h-4.4zM843.8 868.5h4.4v4h-4.4zM852.0 868.5h4.4v4h-4.4zM860.1 868.5h4.4v4h-4.4zM876.5 868.5h4.4v4h-4.4zM884.6 868.5h4.4v4h-4.4zM900.9 868.5h4.4v4h-4.4zM909.1 868.5h4.4v4h-4.4zM917.2 868.5h4.4v4h-4.4zM974.3 868.5h4.4v4h-4.4zM982.4 868.5h4.4v4h-4.4zM1023.2 868.5h4.4v4h-4.4zM1031.4 868.5h4.4v4h-4.4zM1039.5 868.5h4.4v4h-4.4zM1047.7 868.5h4.4v4h-4.4zM1064.0 868.5h4.4v4h-4.4zM1080.3 868.5h4.4v4h-4.4zM1088.4 868.5h4.4v4h-4.4zM1096.6 868.5h4.4v4h-4.4zM1104.7 868.5h4.4v4h-4.4zM1121.0 868.5h4.4v4h-4.4zM1145.5 868.5h4.4v4h-4.4zM1161.8 868.5h4.4v4h-4.4zM1170.0 868.5h4.4v4h-4.4zM1178.1 868.5h4.4v4h-4.4zM1186.3 868.5h4.4v4h-4.4zM1194.4 868.5h4.4v4h-4.4zM1210.7 868.5h4.4v4h-4.4zM1218.9 868.5h4.4v4h-4.4zM1243.3 868.5h4.4v4h-4.4zM1251.5 868.5h4.4v4h-4.4zM1259.6 868.5h4.4v4h-4.4zM1275.9 868.5h4.4v4h-4.4zM1284.1 868.5h4.4v4h-4.4zM1292.3 868.5h4.4v4h-4.4zM1300.4 868.5h4.4v4h-4.4zM1316.7 868.5h4.4v4h-4.4zM1324.9 868.5h4.4v4h-4.4zM1333.0 868.5h4.4v4h-4.4zM1365.6 868.5h4.4v4h-4.4zM1373.8 868.5h4.4v4h-4.4zM1381.9 868.5h4.4v4h-4.4zM1398.2 868.5h4.4v4h-4.4zM1414.5 868.5h4.4v4h-4.4zM1422.7 868.5h4.4v4h-4.4zM1430.9 868.5h4.4v4h-4.4zM1439.0 868.5h4.4v4h-4.4zM1455.3 868.5h4.4v4h-4.4zM1479.8 868.5h4.4v4h-4.4zM1487.9 868.5h4.4v4h-4.4zM1496.1 868.5h4.4v4h-4.4zM1512.4 868.5h4.4v4h-4.4zM1545.0 868.5h4.4v4h-4.4zM1577.6 868.5h4.4v4h-4.4zM1585.8 868.5h4.4v4h-4.4zM1593.9 868.5h4.4v4h-4.4zM1602.1 868.5h4.4v4h-4.4zM1618.4 868.5h4.4v4h-4.4zM1634.7 868.5h4.4v4h-4.4zM1642.8 868.5h4.4v4h-4.4zM1651.0 868.5h4.4v4h-4.4zM1659.1 868.5h4.4v4h-4.4zM1675.4 868.5h4.4v4h-4.4z" fill="#1fd2c9" stroke="#1fd2c9" stroke-width="3" stroke-linejoin="round"/>
<path d="M332.4 826.7C332.4 826.7 337.3 839.8 340.6 848.6C343.8 857.3 345.4 870.5 348.7 870.5C352.0 870.5 353.6 866.1 356.9 859.5C360.1 853.0 361.8 837.6 365.0 837.6C368.3 837.6 369.9 844.2 373.2 848.6C376.4 853.0 378.1 859.5 381.3 859.5H389.5C392.7 859.5 394.4 848.6 397.6 848.6C400.9 848.6 402.5 859.5 405.8 859.5H413.9C417.2 859.5 418.8 837.6 422.1 837.6C425.3 837.6 427.0 870.5 430.2 870.5H438.4C441.7 870.5 443.3 859.5 446.5 859.5H454.7C458.0 859.5 459.6 870.5 462.8 870.5C466.1 870.5 467.7 848.6 471.0 848.6C474.3 848.6 475.9 859.5 479.2 859.5H487.3H495.5H503.6H511.8C515.0 859.5 516.7 870.5 519.9 870.5C523.2 870.5 524.8 859.5 528.1 859.5H536.2C539.5 859.5 541.1 837.6 544.4 837.6C547.6 837.6 549.3 859.5 552.5 859.5H560.7C563.9 859.5 565.6 870.5 568.8 870.5H577.0C580.3 870.5 581.9 859.5 585.1 859.5H593.3H601.4H609.6H617.8C621.0 859.5 622.6 870.5 625.9 870.5H634.1C637.3 870.5 639.0 863.9 642.2 859.5C645.5 855.2 647.1 848.6 650.4 848.6C653.6 848.6 655.3 859.5 658.5 859.5H666.7H674.8C678.1 859.5 679.7 837.6 683.0 837.6C686.2 837.6 687.9 844.2 691.1 848.6C694.4 853.0 696.0 859.5 699.3 859.5H707.4H715.6H723.7H731.9H740.0C743.3 859.5 744.9 848.6 748.2 848.6C751.5 848.6 753.1 859.5 756.4 859.5H764.5C767.8 859.5 769.4 826.7 772.7 826.7C775.9 826.7 777.6 831.0 780.8 837.6C784.1 844.2 785.7 859.5 789.0 859.5H797.1C800.4 859.5 802.0 848.6 805.3 848.6C808.5 848.6 810.2 859.5 813.4 859.5H821.6H829.7H837.9H846.0H854.2H862.3H870.5H878.7H886.8H895.0H903.1H911.3H919.4H927.6C930.8 859.5 932.5 848.6 935.7 848.6C939.0 848.6 940.6 859.5 943.9 859.5H952.0H960.2H968.3C971.6 859.5 973.2 870.5 976.5 870.5C979.7 870.5 981.4 859.5 984.6 859.5H992.8H1000.9H1009.1H1017.3C1020.5 859.5 1022.1 848.6 1025.4 848.6C1028.7 848.6 1030.3 859.5 1033.6 859.5H1041.7H1049.9H1058.0H1066.2H1074.3C1077.6 859.5 1079.2 870.5 1082.5 870.5H1090.6C1093.9 870.5 1095.5 859.5 1098.8 859.5H1106.9C1110.2 859.5 1111.8 837.6 1115.1 837.6C1118.3 837.6 1120.0 859.5 1123.2 859.5H1131.4H1139.5H1147.7H1155.9H1164.0C1167.3 859.5 1168.9 848.6 1172.2 848.6C1175.4 848.6 1177.1 859.5 1180.3 859.5H1188.5C1191.7 859.5 1193.4 848.6 1196.6 848.6C1199.9 848.6 1201.5 859.5 1204.8 859.5H1212.9H1221.1H1229.2H1237.4H1245.5C1248.8 859.5 1250.4 870.5 1253.7 870.5C1257.0 870.5 1258.6 859.5 1261.8 859.5H1270.0H1278.1H1286.3C1289.6 859.5 1291.2 870.5 1294.5 870.5H1302.6C1305.9 870.5 1307.5 859.5 1310.8 859.5C1314.0 859.5 1315.7 870.5 1318.9 870.5C1322.2 870.5 1323.8 859.5 1327.1 859.5H1335.2H1343.4H1351.5H1359.7C1362.9 859.5 1364.6 870.5 1367.8 870.5H1376.0C1379.2 870.5 1380.9 859.5 1384.1 859.5H1392.3H1400.4H1408.6H1416.7C1420.0 859.5 1421.6 870.5 1424.9 870.5C1428.2 870.5 1429.8 859.5 1433.1 859.5H1441.2H1449.4H1457.5H1465.7H1473.8H1482.0H1490.1H1498.3H1506.4H1514.6H1522.7H1530.9H1539.0C1542.3 859.5 1543.9 870.5 1547.2 870.5C1550.5 870.5 1552.1 859.5 1555.3 859.5H1563.5C1566.8 859.5 1568.4 815.7 1571.7 815.7C1574.9 815.7 1576.5 859.5 1579.8 859.5H1588.0H1596.1C1599.4 859.5 1601.0 870.5 1604.3 870.5C1607.5 870.5 1609.2 859.5 1612.4 859.5H1620.6H1628.7H1636.9H1645.0H1653.2C1656.4 859.5 1658.1 870.5 1661.3 870.5C1664.6 870.5 1666.2 859.5 1669.5 859.5H1677.6H1685.8" fill="none" stroke="#dc52ea" stroke-width="2" stroke-linejoin="round" stroke-linecap="round"/>
<path d="M332.4 826.7h0M365.0 837.6h0M397.6 848.6h0M422.1 837.6h0M772.7 826.7h0M780.8 837.6h0M935.7 848.6h0M1009.1 859.5h0M1571.7 815.7h0" fill="none" stroke="#dc52ea" stroke-width="7.5" stroke-linecap="round"/>
<path d="M332.4 837.6C332.4 837.6 337.3 842.0 340.6 848.6C343.8 855.2 345.4 870.5 348.7 870.5C352.0 870.5 353.6 870.5 356.9 859.5C360.1 848.6 361.8 739.0 365.0 739.0C368.3 739.0 369.9 815.7 373.2 837.6C376.4 859.5 378.1 859.5 381.3 859.5H389.5H397.6H405.8H413.9C417.2 859.5 418.8 848.6 422.1 848.6C425.3 848.6 427.0 870.5 430.2 870.5H438.4C441.7 870.5 443.3 855.2 446.5 848.6C449.8 842.0 451.4 837.6 454.7 837.6C458.0 837.6 459.6 870.5 462.8 870.5C466.1 870.5 467.7 848.6 471.0 848.6C474.3 848.6 475.9 859.5 479.2 859.5C482.4 859.5 484.0 826.7 487.3 826.7C490.6 826.7 492.2 859.5 495.5 859.5H503.6C506.9 859.5 508.5 804.7 511.8 804.7C515.0 804.7 516.7 870.5 519.9 870.5C523.2 870.5 524.8 859.5 528.1 859.5H536.2C539.5 859.5 541.1 804.7 544.4 804.7C547.6 804.7 549.3 859.5 552.5 859.5C555.8 859.5 557.4 826.7 560.7 826.7C563.9 826.7 565.6 870.5 568.8 870.5H577.0C580.3 870.5 581.9 866.1 585.1 859.5C588.4 853.0 590.0 848.6 593.3 837.6C596.6 826.7 598.2 804.7 601.4 804.7C604.7 804.7 606.3 811.3 609.6 815.7C612.9 820.1 614.5 815.7 617.8 826.7C621.0 837.6 622.6 870.5 625.9 870.5H634.1C637.3 870.5 639.0 863.9 642.2 859.5C645.5 855.2 647.1 859.5 650.4 848.6C653.6 837.6 655.3 760.9 658.5 760.9C661.8 760.9 663.4 859.5 666.7 859.5H674.8C678.1 859.5 679.7 815.7 683.0 815.7C686.2 815.7 687.9 839.8 691.1 848.6C694.4 857.3 696.0 859.5 699.3 859.5H707.4H715.6C718.9 859.5 720.5 782.8 723.7 782.8C727.0 782.8 728.6 789.4 731.9 804.7C735.2 820.1 736.8 859.5 740.0 859.5C743.3 859.5 744.9 859.5 748.2 848.6C751.5 837.6 753.1 749.9 756.4 749.9C759.6 749.9 761.2 859.5 764.5 859.5C767.8 859.5 769.4 804.7 772.7 804.7C775.9 804.7 777.6 859.5 780.8 859.5H789.0H797.1C800.4 859.5 802.0 848.6 805.3 848.6C808.5 848.6 810.2 859.5 813.4 859.5H821.6C824.8 859.5 826.5 857.3 829.7 848.6C833.0 839.8 834.6 815.7 837.9 815.7C841.1 815.7 842.8 859.5 846.0 859.5H854.2H862.3H870.5H878.7H886.8H895.0C898.2 859.5 899.8 837.6 903.1 837.6C906.4 837.6 908.0 859.5 911.3 859.5H919.4H927.6H935.7H943.9C947.1 859.5 948.8 826.7 952.0 826.7C955.3 826.7 956.9 831.0 960.2 837.6C963.4 844.2 965.1 853.0 968.3 859.5C971.6 866.1 973.2 870.5 976.5 870.5C979.7 870.5 981.4 859.5 984.6 859.5H992.8H1000.9C1004.2 859.5 1005.8 815.7 1009.1 815.7C1012.4 815.7 1014.0 820.1 1017.3 826.7C1020.5 833.2 1022.1 842.0 1025.4 848.6C1028.7 855.2 1030.3 859.5 1033.6 859.5H1041.7C1045.0 859.5 1046.6 815.7 1049.9 815.7C1053.1 815.7 1054.8 837.6 1058.0 837.6H1066.2C1069.4 837.6 1071.1 853.0 1074.3 859.5C1077.6 866.1 1079.2 870.5 1082.5 870.5H1090.6C1093.9 870.5 1095.5 859.5 1098.8 859.5H1106.9C1110.2 859.5 1111.8 837.6 1115.1 837.6C1118.3 837.6 1120.0 859.5 1123.2 859.5H1131.4H1139.5H1147.7H1155.9C1159.1 859.5 1160.7 837.6 1164.0 837.6C1167.3 837.6 1168.9 844.2 1172.2 848.6C1175.4 853.0 1177.1 859.5 1180.3 859.5H1188.5C1191.7 859.5 1193.4 848.6 1196.6 848.6C1199.9 848.6 1201.5 859.5 1204.8 859.5H1212.9C1216.2 859.5 1217.8 760.9 1221.1 749.9C1224.3 739.0 1226.0 739.0 1229.2 739.0C1232.5 739.0 1234.1 782.8 1237.4 782.8C1240.6 782.8 1242.3 771.9 1245.5 771.9C1248.8 771.9 1250.4 870.5 1253.7 870.5C1257.0 870.5 1258.6 815.7 1261.8 815.7H1270.0C1273.3 815.7 1274.9 728.0 1278.1 728.0C1281.4 728.0 1283.0 732.4 1286.3 760.9C1289.6 789.4 1291.2 870.5 1294.5 870.5H1302.6C1305.9 870.5 1307.5 859.5 1310.8 859.5C1314.0 859.5 1315.7 870.5 1318.9 870.5C1322.2 870.5 1323.8 684.2 1327.1 684.2C1330.3 684.2 1332.0 793.8 1335.2 793.8C1338.5 793.8 1340.1 728.0 1343.4 706.1C1346.6 684.2 1348.3 684.2 1351.5 684.2C1354.8 684.2 1356.4 745.6 1359.7 782.8C1362.9 820.1 1364.6 870.5 1367.8 870.5H1376.0C1379.2 870.5 1380.9 771.9 1384.1 771.9C1387.4 771.9 1389.0 804.7 1392.3 804.7H1400.4C1403.7 804.7 1405.3 640.3 1408.6 640.3C1411.9 640.3 1413.5 848.6 1416.7 859.5C1420.0 870.5 1421.6 870.5 1424.9 870.5C1428.2 870.5 1429.8 796.0 1433.1 760.9C1436.3 725.8 1437.9 695.1 1441.2 695.1C1444.5 695.1 1446.1 793.8 1449.4 793.8C1452.6 793.8 1454.3 771.9 1457.5 771.9C1460.8 771.9 1462.4 782.8 1465.7 782.8H1473.8C1477.1 782.8 1478.7 859.5 1482.0 859.5C1485.2 859.5 1486.9 837.6 1490.1 837.6C1493.4 837.6 1495.0 859.5 1498.3 859.5C1501.5 859.5 1503.2 760.9 1506.4 760.9C1509.7 760.9 1511.3 763.1 1514.6 782.8C1517.8 802.5 1519.5 859.5 1522.7 859.5C1526.0 859.5 1527.6 684.2 1530.9 684.2C1534.2 684.2 1535.8 767.5 1539.0 804.7C1542.3 842.0 1543.9 870.5 1547.2 870.5C1550.5 870.5 1552.1 863.9 1555.3 837.6C1558.6 811.3 1560.2 769.7 1563.5 739.0C1566.8 708.3 1568.4 684.2 1571.7 684.2C1574.9 684.2 1576.5 804.7 1579.8 826.7C1583.1 848.6 1584.7 842.0 1588.0 848.6C1591.2 855.2 1592.9 855.2 1596.1 859.5C1599.4 863.9 1601.0 870.5 1604.3 870.5C1607.5 870.5 1609.2 859.5 1612.4 859.5H1620.6H1628.7C1632.0 859.5 1633.6 848.6 1636.9 848.6C1640.1 848.6 1641.8 859.5 1645.0 859.5C1648.3 859.5 1649.9 837.6 1653.2 837.6C1656.4 837.6 1658.1 870.5 1661.3 870.5C1664.6 870.5 1666.2 826.7 1669.5 826.7C1672.8 826.7 1674.4 859.5 1677.6 859.5H1685.8" fill="none" stroke="#c313d6" stroke-width="2" stroke-linejoin="round" stroke-linecap="round"/>
<path d="M365.0 739.0h0M373.2 837.6h0M422.1 848.6h0M446.5 848.6h0M454.7 837.6h0M487.3 826.7h0M511.8 804.7h0M544.4 804.7h0M560.7 826.7h0M593.3 837.6h0M601.4 804.7h0M609.6 815.7h0M617.8 826.7h0M658.5 760.9h0M683.0 815.7h0M723.7 782.8h0M731.9 804.7h0M756.4 749.9h0M772.7 804.7h0M829.7 848.6h0M837.9 815.7h0M903.1 837.6h0M952.0 826.7h0M960.2 837.6h0M1009.1 815.7h0M1017.3 826.7h0M1049.9 815.7h0M1058.0 837.6h0M1066.2 837.6h0M1164.0 837.6h0M1221.1 749.9h0M1229.2 739.0h0M1237.4 782.8h0M1245.5 771.9h0M1261.8 815.7h0M1270.0 815.7h0M1278.1 728.0h0M1286.3 760.9h0M1327.1 684.2h0M1335.2 793.8h0M1343.4 706.1h0M1351.5 684.2h0M1359.7 782.8h0M1384.1 771.9h0M1392.3 804.7h0M1400.4 804.7h0M1408.6 640.3h0M1433.1 760.9h0M1441.2 695.1h0M1449.4 793.8h0M1457.5 771.9h0M1465.7 782.8h0M1473.8 782.8h0M1490.1 837.6h0M1506.4 760.9h0M1514.6 782.8h0M1530.9 684.2h0M1539.0 804.7h0M1555.3 837.6h0M1563.5 739.0h0M1571.7 684.2h0M1579.8 826.7h0M1588.0 848.6h0M1636.9 848.6h0M1653.2 837.6h0M1669.5 826.7h0" fill="none" stroke="#c313d6" stroke-width="7.5" stroke-linecap="round"/>
<path d="M332.4 815.7C332.4 815.7 337.3 782.8 340.6 782.8C343.8 782.8 345.4 870.5 348.7 870.5C352.0 870.5 353.6 870.5 356.9 859.5C360.1 848.6 361.8 717.1 365.0 717.1C368.3 717.1 369.9 815.7 373.2 815.7H381.3C384.6 815.7 386.2 859.5 389.5 859.5C392.7 859.5 394.4 815.7 397.6 815.7C400.9 815.7 402.5 859.5 405.8 859.5H413.9C417.2 859.5 418.8 815.7 422.1 815.7C425.3 815.7 427.0 870.5 430.2 870.5H438.4C441.7 870.5 443.3 824.5 446.5 804.7C449.8 785.0 451.4 771.9 454.7 771.9C458.0 771.9 459.6 870.5 462.8 870.5C466.1 870.5 467.7 782.8 471.0 782.8C474.3 782.8 475.9 859.5 479.2 859.5H487.3C490.6 859.5 492.2 728.0 495.5 728.0C498.7 728.0 500.4 859.5 503.6 859.5C506.9 859.5 508.5 782.8 511.8 782.8C515.0 782.8 516.7 870.5 519.9 870.5C523.2 870.5 524.8 826.7 528.1 793.8C531.3 760.9 533.0 717.1 536.2 706.1C539.5 695.1 541.1 695.1 544.4 695.1C547.6 695.1 549.3 859.5 552.5 859.5C555.8 859.5 557.4 804.7 560.7 804.7C563.9 804.7 565.6 870.5 568.8 870.5H577.0C580.3 870.5 581.9 793.8 585.1 782.8C588.4 771.9 590.0 778.4 593.3 771.9C596.6 765.3 598.2 749.9 601.4 749.9C604.7 749.9 606.3 782.8 609.6 793.8C612.9 804.7 614.5 793.8 617.8 804.7C621.0 815.7 622.6 870.5 625.9 870.5H634.1C637.3 870.5 639.0 870.5 642.2 859.5C645.5 848.6 647.1 811.3 650.4 760.9C653.6 710.5 655.3 607.5 658.5 607.5C661.8 607.5 663.4 859.5 666.7 859.5C669.9 859.5 671.6 859.5 674.8 848.6C678.1 837.6 679.7 815.7 683.0 804.7C686.2 793.8 687.9 793.8 691.1 793.8H699.3C702.5 793.8 704.2 804.7 707.4 804.7C710.7 804.7 712.3 747.7 715.6 728.0C718.9 708.3 720.5 706.1 723.7 706.1C727.0 706.1 728.6 859.5 731.9 859.5H740.0C743.3 859.5 744.9 859.5 748.2 848.6C751.5 837.6 753.1 717.1 756.4 717.1C759.6 717.1 761.2 793.8 764.5 793.8C767.8 793.8 769.4 695.1 772.7 695.1C775.9 695.1 777.6 706.1 780.8 739.0C784.1 771.9 785.7 859.5 789.0 859.5C792.2 859.5 793.9 833.2 797.1 815.7C800.4 798.2 802.0 771.9 805.3 771.9C808.5 771.9 810.2 859.5 813.4 859.5H821.6H829.7C833.0 859.5 834.6 695.1 837.9 695.1C841.1 695.1 842.8 859.5 846.0 859.5H854.2H862.3C865.6 859.5 867.2 870.5 870.5 870.5C873.8 870.5 875.4 863.9 878.7 859.5C881.9 855.2 883.5 848.6 886.8 848.6C890.1 848.6 891.7 859.5 895.0 859.5H903.1H911.3C914.5 859.5 916.2 815.7 919.4 815.7C922.7 815.7 924.3 859.5 927.6 859.5C930.8 859.5 932.5 782.8 935.7 782.8C939.0 782.8 940.6 811.3 943.9 826.7C947.1 842.0 948.8 859.5 952.0 859.5C955.3 859.5 956.9 815.7 960.2 804.7C963.4 793.8 965.1 793.8 968.3 793.8C971.6 793.8 973.2 870.5 976.5 870.5C979.7 870.5 981.4 826.7 984.6 826.7C987.9 826.7 989.5 859.5 992.8 859.5C996.1 859.5 997.7 828.9 1000.9 815.7C1004.2 802.5 1005.8 793.8 1009.1 793.8H1017.3C1020.5 793.8 1022.1 848.6 1025.4 848.6C1028.7 848.6 1030.3 798.2 1033.6 771.9C1036.8 745.6 1038.4 717.1 1041.7 717.1C1045.0 717.1 1046.6 765.3 1049.9 782.8C1053.1 800.4 1054.8 804.7 1058.0 804.7C1061.3 804.7 1062.9 771.9 1066.2 771.9C1069.4 771.9 1071.1 848.6 1074.3 859.5C1077.6 870.5 1079.2 870.5 1082.5 870.5H1090.6C1093.9 870.5 1095.5 837.6 1098.8 837.6H1106.9C1110.2 837.6 1111.8 793.8 1115.1 793.8C1118.3 793.8 1120.0 815.7 1123.2 815.7C1126.5 815.7 1128.1 793.8 1131.4 793.8C1134.7 793.8 1136.3 859.5 1139.5 859.5C1142.8 859.5 1144.4 804.7 1147.7 804.7C1151.0 804.7 1152.6 815.7 1155.9 826.7C1159.1 837.6 1160.7 859.5 1164.0 859.5C1167.3 859.5 1168.9 837.6 1172.2 837.6H1180.3C1183.6 837.6 1185.2 859.5 1188.5 859.5C1191.7 859.5 1193.4 793.8 1196.6 793.8C1199.9 793.8 1201.5 815.7 1204.8 815.7C1208.0 815.7 1209.7 813.5 1212.9 804.7C1216.2 796.0 1217.8 780.6 1221.1 771.9C1224.3 763.1 1226.0 760.9 1229.2 760.9C1232.5 760.9 1234.1 793.8 1237.4 804.7C1240.6 815.7 1242.3 804.7 1245.5 815.7C1248.8 826.7 1250.4 870.5 1253.7 870.5C1257.0 870.5 1258.6 837.6 1261.8 837.6H1270.0C1273.3 837.6 1274.9 771.9 1278.1 771.9C1281.4 771.9 1283.0 848.6 1286.3 859.5C1289.6 870.5 1291.2 870.5 1294.5 870.5H1302.6H1310.8H1318.9C1322.2 870.5 1323.8 870.5 1327.1 859.5C1330.3 848.6 1332.0 824.5 1335.2 804.7C1338.5 785.0 1340.1 760.9 1343.4 760.9C1346.6 760.9 1348.3 774.1 1351.5 782.8C1354.8 791.6 1356.4 787.2 1359.7 804.7C1362.9 822.3 1364.6 870.5 1367.8 870.5H1376.0C1379.2 870.5 1380.9 833.2 1384.1 815.7C1387.4 798.2 1389.0 782.8 1392.3 782.8C1395.6 782.8 1397.2 837.6 1400.4 837.6C1403.7 837.6 1405.3 749.9 1408.6 749.9C1411.9 749.9 1413.5 848.6 1416.7 859.5C1420.0 870.5 1421.6 870.5 1424.9 870.5C1428.2 870.5 1429.8 859.5 1433.1 837.6C1436.3 815.7 1437.9 760.9 1441.2 760.9C1444.5 760.9 1446.1 776.2 1449.4 782.8C1452.6 789.4 1454.3 782.8 1457.5 793.8C1460.8 804.7 1462.4 859.5 1465.7 859.5C1468.9 859.5 1470.6 815.7 1473.8 815.7C1477.1 815.7 1478.7 859.5 1482.0 859.5C1485.2 859.5 1486.9 826.7 1490.1 826.7C1493.4 826.7 1495.0 859.5 1498.3 859.5C1501.5 859.5 1503.2 782.8 1506.4 782.8C1509.7 782.8 1511.3 789.4 1514.6 804.7C1517.8 820.1 1519.5 859.5 1522.7 859.5C1526.0 859.5 1527.6 728.0 1530.9 728.0C1534.2 728.0 1535.8 809.1 1539.0 837.6C1542.3 866.1 1543.9 870.5 1547.2 870.5C1550.5 870.5 1552.1 870.5 1555.3 859.5C1558.6 848.6 1560.2 793.8 1563.5 760.9C1566.8 728.0 1568.4 695.1 1571.7 695.1C1574.9 695.1 1576.5 859.5 1579.8 859.5H1588.0H1596.1C1599.4 859.5 1601.0 870.5 1604.3 870.5C1607.5 870.5 1609.2 826.7 1612.4 826.7C1615.7 826.7 1617.3 833.2 1620.6 837.6C1623.8 842.0 1625.5 844.2 1628.7 848.6C1632.0 853.0 1633.6 859.5 1636.9 859.5H1645.0H1653.2C1656.4 859.5 1658.1 870.5 1661.3 870.5C1664.6 870.5 1666.2 837.6 1669.5 837.6C1672.8 837.6 1674.4 848.6 1677.6 848.6C1680.9 848.6 1685.8 815.7 1685.8 815.7" fill="none" stroke="#1a84d6" stroke-width="2" stroke-linejoin="round" stroke-linecap="round"/>
<path d="M332.4 815.7h0M340.6 782.8h0M365.0 717.1h0M373.2 815.7h0M381.3 815.7h0M397.6 815.7h0M422.1 815.7h0M446.5 804.7h0M454.7 771.9h0M471.0 782.8h0M495.5 728.0h0M511.8 782.8h0M528.1 793.8h0M536.2 706.1h0M544.4 695.1h0M560.7 804.7h0M585.1 782.8h0M593.3 771.9h0M601.4 749.9h0M609.6 793.8h0M617.8 804.7h0M650.4 760.9h0M658.5 607.5h0M674.8 848.6h0M683.0 804.7h0M691.1 793.8h0M699.3 793.8h0M707.4 804.7h0M715.6 728.0h0M723.7 706.1h0M756.4 717.1h0M764.5 793.8h0M772.7 695.1h0M780.8 739.0h0M797.1 815.7h0M805.3 771.9h0M837.9 695.1h0M886.8 848.6h0M919.4 815.7h0M935.7 782.8h0M943.9 826.7h0M960.2 804.7h0M968.3 793.8h0M984.6 826.7h0M1000.9 815.7h0M1009.1 793.8h0M1017.3 793.8h0M1033.6 771.9h0M1041.7 717.1h0M1049.9 782.8h0M1058.0 804.7h0M1066.2 771.9h0M1098.8 837.6h0M1106.9 837.6h0M1115.1 793.8h0M1123.2 815.7h0M1131.4 793.8h0M1147.7 804.7h0M1155.9 826.7h0M1172.2 837.6h0M1180.3 837.6h0M1196.6 793.8h0M1204.8 815.7h0M1212.9 804.7h0M1221.1 771.9h0M1229.2 760.9h0M1237.4 804.7h0M1245.5 815.7h0M1261.8 837.6h0M1270.0 837.6h0M1278.1 771.9h0M1335.2 804.7h0M1343.4 760.9h0M1351.5 782.8h0M1359.7 804.7h0M1384.1 815.7h0M1392.3 782.8h0M1400.4 837.6h0M1408.6 749.9h0M1433.1 837.6h0M1441.2 760.9h0M1449.4 782.8h0M1457.5 793.8h0M1473.8 815.7h0M1490.1 826.7h0M1506.4 782.8h0M1514.6 804.7h0M1530.9 728.0h0M1539.0 837.6h0M1563.5 760.9h0M1571.7 695.1h0M1612.4 826.7h0M1620.6 837.6h0M1628.7 848.6h0M1669.5 837.6h0M1677.6 848.6h0M1685.8 815.7h0" fill="none" stroke="#1a84d6" stroke-width="7.5" stroke-linecap="round"/>
<path d="M332.4 837.6C332.4 837.6 337.3 842.0 340.6 848.6C343.8 855.2 345.4 870.5 348.7 870.5C352.0 870.5 353.6 859.5 356.9 859.5H365.0C368.3 859.5 369.9 848.6 373.2 848.6C376.4 848.6 378.1 859.5 381.3 859.5H389.5H397.6H405.8H413.9H422.1C425.3 859.5 427.0 870.5 430.2 870.5H438.4C441.7 870.5 443.3 859.5 446.5 859.5H454.7C458.0 859.5 459.6 870.5 462.8 870.5C466.1 870.5 467.7 848.6 471.0 848.6C474.3 848.6 475.9 859.5 479.2 859.5H487.3C490.6 859.5 492.2 826.7 495.5 826.7C498.7 826.7 500.4 859.5 503.6 859.5H511.8C515.0 859.5 516.7 870.5 519.9 870.5C523.2 870.5 524.8 868.3 528.1 859.5C531.3 850.8 533.0 826.7 536.2 826.7C539.5 826.7 541.1 831.0 544.4 837.6C547.6 844.2 549.3 859.5 552.5 859.5H560.7C563.9 859.5 565.6 870.5 568.8 870.5H577.0C580.3 870.5 581.9 859.5 585.1 859.5H593.3H601.4H609.6H617.8C621.0 859.5 622.6 870.5 625.9 870.5H634.1C637.3 870.5 639.0 863.9 642.2 859.5C645.5 855.2 647.1 859.5 650.4 848.6C653.6 837.6 655.3 771.9 658.5 771.9C661.8 771.9 663.4 859.5 666.7 859.5H674.8C678.1 859.5 679.7 837.6 683.0 837.6C686.2 837.6 687.9 844.2 691.1 848.6C694.4 853.0 696.0 859.5 699.3 859.5H707.4H715.6C718.9 859.5 720.5 815.7 723.7 815.7C727.0 815.7 728.6 859.5 731.9 859.5H740.0C743.3 859.5 744.9 848.6 748.2 848.6H756.4C759.6 848.6 761.2 859.5 764.5 859.5C767.8 859.5 769.4 793.8 772.7 793.8C775.9 793.8 777.6 802.5 780.8 815.7C784.1 828.9 785.7 859.5 789.0 859.5H797.1C800.4 859.5 802.0 848.6 805.3 848.6C808.5 848.6 810.2 859.5 813.4 859.5H821.6H829.7H837.9H846.0H854.2H862.3C865.6 859.5 867.2 870.5 870.5 870.5C873.8 870.5 875.4 859.5 878.7 859.5H886.8H895.0H903.1H911.3H919.4H927.6H935.7H943.9H952.0C955.3 859.5 956.9 826.7 960.2 826.7C963.4 826.7 965.1 850.8 968.3 859.5C971.6 868.3 973.2 870.5 976.5 870.5C979.7 870.5 981.4 859.5 984.6 859.5H992.8H1000.9C1004.2 859.5 1005.8 848.6 1009.1 848.6C1012.4 848.6 1014.0 859.5 1017.3 859.5C1020.5 859.5 1022.1 848.6 1025.4 848.6C1028.7 848.6 1030.3 859.5 1033.6 859.5H1041.7H1049.9H1058.0H1066.2H1074.3C1077.6 859.5 1079.2 870.5 1082.5 870.5H1090.6C1093.9 870.5 1095.5 859.5 1098.8 859.5H1106.9C1110.2 859.5 1111.8 837.6 1115.1 837.6C1118.3 837.6 1120.0 859.5 1123.2 859.5H1131.4H1139.5H1147.7H1155.9H1164.0C1167.3 859.5 1168.9 848.6 1172.2 848.6C1175.4 848.6 1177.1 859.5 1180.3 859.5H1188.5C1191.7 859.5 1193.4 848.6 1196.6 848.6C1199.9 848.6 1201.5 859.5 1204.8 859.5H1212.9H1221.1H1229.2H1237.4H1245.5C1248.8 859.5 1250.4 870.5 1253.7 870.5C1257.0 870.5 1258.6 859.5 1261.8 859.5H1270.0H1278.1H1286.3C1289.6 859.5 1291.2 870.5 1294.5 870.5H1302.6H1310.8H1318.9C1322.2 870.5 1323.8 859.5 1327.1 859.5H1335.2H1343.4H1351.5H1359.7C1362.9 859.5 1364.6 870.5 1367.8 870.5H1376.0C1379.2 870.5 1380.9 859.5 1384.1 859.5H1392.3H1400.4H1408.6H1416.7C1420.0 859.5 1421.6 870.5 1424.9 870.5C1428.2 870.5 1429.8 859.5 1433.1 859.5H1441.2H1449.4H1457.5H1465.7H1473.8H1482.0H1490.1H1498.3H1506.4H1514.6H1522.7H1530.9H1539.0C1542.3 859.5 1543.9 870.5 1547.2 870.5C1550.5 870.5 1552.1 859.5 1555.3 859.5H1563.5C1566.8 859.5 1568.4 826.7 1571.7 826.7C1574.9 826.7 1576.5 859.5 1579.8 859.5H1588.0H1596.1C1599.4 859.5 1601.0 870.5 1604.3 870.5C1607.5 870.5 1609.2 859.5 1612.4 859.5H1620.6H1628.7H1636.9H1645.0H1653.2C1656.4 859.5 1658.1 870.5 1661.3 870.5C1664.6 870.5 1666.2 859.5 1669.5 859.5H1677.6H1685.8" fill="none" stroke="#1873c4" stroke-width="2" stroke-linejoin="round" stroke-linecap="round"/>
<path d="M495.5 826.7h0M528.1 859.5h0M536.2 826.7h0M544.4 837.6h0M658.5 771.9h0M715.6 859.5h0M723.7 815.7h0M756.4 848.6h0M772.7 793.8h0M780.8 815.7h0M837.9 859.5h0M960.2 826.7h0M1033.6 859.5h0M1571.7 826.7h0" fill="none" stroke="#1873c4" stroke-width="7.5" stroke-linecap="round"/>
<path d="M332.4 837.6C332.4 837.6 337.3 815.7 340.6 815.7C343.8 815.7 345.4 870.5 348.7 870.5C352.0 870.5 353.6 870.5 356.9 859.5C360.1 848.6 361.8 815.7 365.0 815.7C368.3 815.7 369.9 848.6 373.2 848.6C376.4 848.6 378.1 837.6 381.3 837.6C384.6 837.6 386.2 859.5 389.5 859.5H397.6H405.8H413.9H422.1C425.3 859.5 427.0 870.5 430.2 870.5H438.4C441.7 870.5 443.3 837.6 446.5 837.6C449.8 837.6 451.4 853.0 454.7 859.5C458.0 866.1 459.6 870.5 462.8 870.5C466.1 870.5 467.7 793.8 471.0 793.8C474.3 793.8 475.9 837.6 479.2 848.6C482.4 859.5 484.0 859.5 487.3 859.5C490.6 859.5 492.2 804.7 495.5 804.7C498.7 804.7 500.4 859.5 503.6 859.5H511.8C515.0 859.5 516.7 870.5 519.9 870.5C523.2 870.5 524.8 828.9 528.1 804.7C531.3 780.6 533.0 765.3 536.2 749.9C539.5 734.6 541.1 728.0 544.4 728.0C547.6 728.0 549.3 859.5 552.5 859.5C555.8 859.5 557.4 837.6 560.7 837.6C563.9 837.6 565.6 870.5 568.8 870.5H577.0C580.3 870.5 581.9 859.5 585.1 859.5H593.3H601.4H609.6H617.8C621.0 859.5 622.6 870.5 625.9 870.5H634.1C637.3 870.5 639.0 863.9 642.2 859.5C645.5 855.2 647.1 859.5 650.4 848.6C653.6 837.6 655.3 749.9 658.5 749.9C661.8 749.9 663.4 815.7 666.7 826.7C669.9 837.6 671.6 837.6 674.8 837.6H683.0C686.2 837.6 687.9 844.2 691.1 848.6C694.4 853.0 696.0 859.5 699.3 859.5H707.4C710.7 859.5 712.3 835.4 715.6 815.7C718.9 796.0 720.5 760.9 723.7 760.9C727.0 760.9 728.6 837.6 731.9 837.6H740.0C743.3 837.6 744.9 848.6 748.2 848.6C751.5 848.6 753.1 739.0 756.4 739.0C759.6 739.0 761.2 859.5 764.5 859.5C767.8 859.5 769.4 717.1 772.7 717.1C775.9 717.1 777.6 776.2 780.8 804.7C784.1 833.2 785.7 859.5 789.0 859.5H797.1C800.4 859.5 802.0 826.7 805.3 826.7C808.5 826.7 810.2 848.6 813.4 848.6C816.7 848.6 818.3 837.6 821.6 837.6C824.8 837.6 826.5 859.5 829.7 859.5C833.0 859.5 834.6 760.9 837.9 760.9C841.1 760.9 842.8 859.5 846.0 859.5H854.2H862.3C865.6 859.5 867.2 870.5 870.5 870.5C873.8 870.5 875.4 866.1 878.7 859.5C881.9 853.0 883.5 837.6 886.8 837.6C890.1 837.6 891.7 859.5 895.0 859.5H903.1H911.3C914.5 859.5 916.2 826.7 919.4 826.7C922.7 826.7 924.3 859.5 927.6 859.5H935.7H943.9C947.1 859.5 948.8 846.4 952.0 837.6C955.3 828.9 956.9 815.7 960.2 815.7C963.4 815.7 965.1 848.6 968.3 859.5C971.6 870.5 973.2 870.5 976.5 870.5C979.7 870.5 981.4 859.5 984.6 859.5H992.8H1000.9C1004.2 859.5 1005.8 848.6 1009.1 848.6C1012.4 848.6 1014.0 859.5 1017.3 859.5C1020.5 859.5 1022.1 857.3 1025.4 848.6C1028.7 839.8 1030.3 815.7 1033.6 815.7C1036.8 815.7 1038.4 859.5 1041.7 859.5C1045.0 859.5 1046.6 837.6 1049.9 837.6C1053.1 837.6 1054.8 859.5 1058.0 859.5C1061.3 859.5 1062.9 804.7 1066.2 804.7C1069.4 804.7 1071.1 848.6 1074.3 859.5C1077.6 870.5 1079.2 870.5 1082.5 870.5H1090.6C1093.9 870.5 1095.5 848.6 1098.8 848.6C1102.0 848.6 1103.7 859.5 1106.9 859.5C1110.2 859.5 1111.8 837.6 1115.1 837.6C1118.3 837.6 1120.0 859.5 1123.2 859.5C1126.5 859.5 1128.1 826.7 1131.4 826.7C1134.7 826.7 1136.3 859.5 1139.5 859.5C1142.8 859.5 1144.4 826.7 1147.7 826.7C1151.0 826.7 1152.6 859.5 1155.9 859.5H1164.0C1167.3 859.5 1168.9 848.6 1172.2 848.6C1175.4 848.6 1177.1 859.5 1180.3 859.5H1188.5C1191.7 859.5 1193.4 848.6 1196.6 848.6H1204.8C1208.0 848.6 1209.7 859.5 1212.9 859.5H1221.1H1229.2H1237.4H1245.5C1248.8 859.5 1250.4 870.5 1253.7 870.5C1257.0 870.5 1258.6 859.5 1261.8 859.5H1270.0C1273.3 859.5 1274.9 848.6 1278.1 848.6C1281.4 848.6 1283.0 855.2 1286.3 859.5C1289.6 863.9 1291.2 870.5 1294.5 870.5H1302.6H1310.8H1318.9C1322.2 870.5 1323.8 859.5 1327.1 859.5H1335.2C1338.5 859.5 1340.1 826.7 1343.4 826.7H1351.5C1354.8 826.7 1356.4 850.8 1359.7 859.5C1362.9 868.3 1364.6 870.5 1367.8 870.5H1376.0C1379.2 870.5 1380.9 859.5 1384.1 859.5H1392.3H1400.4H1408.6H1416.7C1420.0 859.5 1421.6 870.5 1424.9 870.5C1428.2 870.5 1429.8 866.1 1433.1 859.5C1436.3 853.0 1437.9 837.6 1441.2 837.6C1444.5 837.6 1446.1 859.5 1449.4 859.5C1452.6 859.5 1454.3 826.7 1457.5 826.7C1460.8 826.7 1462.4 859.5 1465.7 859.5H1473.8H1482.0H1490.1H1498.3C1501.5 859.5 1503.2 815.7 1506.4 815.7H1514.6C1517.8 815.7 1519.5 859.5 1522.7 859.5C1526.0 859.5 1527.6 815.7 1530.9 815.7C1534.2 815.7 1535.8 848.6 1539.0 859.5C1542.3 870.5 1543.9 870.5 1547.2 870.5C1550.5 870.5 1552.1 868.3 1555.3 859.5C1558.6 850.8 1560.2 846.4 1563.5 826.7C1566.8 806.9 1568.4 760.9 1571.7 760.9C1574.9 760.9 1576.5 859.5 1579.8 859.5H1588.0H1596.1C1599.4 859.5 1601.0 870.5 1604.3 870.5C1607.5 870.5 1609.2 859.5 1612.4 859.5H1620.6H1628.7H1636.9H1645.0H1653.2C1656.4 859.5 1658.1 870.5 1661.3 870.5C1664.6 870.5 1666.2 859.5 1669.5 859.5H1677.6H1685.8" fill="none" stroke="#1662b0" stroke-width="2" stroke-linejoin="round" stroke-linecap="round"/>
<path d="M332.4 837.6h0M340.6 815.7h0M365.0 815.7h0M381.3 837.6h0M397.6 859.5h0M405.8 859.5h0M413.9 859.5h0M446.5 837.6h0M471.0 793.8h0M479.2 848.6h0M495.5 804.7h0M528.1 804.7h0M536.2 749.9h0M544.4 728.0h0M560.7 837.6h0M658.5 749.9h0M666.7 826.7h0M674.8 837.6h0M699.3 859.5h0M715.6 815.7h0M723.7 760.9h0M731.9 837.6h0M740.0 837.6h0M756.4 739.0h0M772.7 717.1h0M780.8 804.7h0M805.3 826.7h0M813.4 848.6h0M821.6 837.6h0M837.9 760.9h0M886.8 837.6h0M895.0 859.5h0M919.4 826.7h0M952.0 837.6h0M960.2 815.7h0M1017.3 859.5h0M1033.6 815.7h0M1041.7 859.5h0M1049.9 837.6h0M1066.2 804.7h0M1098.8 848.6h0M1131.4 826.7h0M1147.7 826.7h0M1204.8 848.6h0M1278.1 848.6h0M1343.4 826.7h0M1351.5 826.7h0M1441.2 837.6h0M1457.5 826.7h0M1506.4 815.7h0M1514.6 815.7h0M1530.9 815.7h0M1563.5 826.7h0M1571.7 760.9h0" fill="none" stroke="#1662b0" stroke-width="7.5" stroke-linecap="round"/>
<path d="M332.4 804.7H340.6C343.8 804.7 345.4 870.5 348.7 870.5C352.0 870.5 353.6 870.5 356.9 859.5C360.1 848.6 361.8 760.9 365.0 760.9C368.3 760.9 369.9 776.2 373.2 793.8C376.4 811.3 378.1 837.6 381.3 848.6C384.6 859.5 386.2 859.5 389.5 859.5C392.7 859.5 394.4 837.6 397.6 837.6C400.9 837.6 402.5 844.2 405.8 848.6C409.0 853.0 410.7 859.5 413.9 859.5C417.2 859.5 418.8 804.7 422.1 804.7C425.3 804.7 427.0 870.5 430.2 870.5H438.4C441.7 870.5 443.3 870.5 446.5 859.5C449.8 848.6 451.4 804.7 454.7 804.7C458.0 804.7 459.6 870.5 462.8 870.5C466.1 870.5 467.7 739.0 471.0 739.0C474.3 739.0 475.9 837.6 479.2 837.6C482.4 837.6 484.0 813.5 487.3 804.7C490.6 796.0 492.2 793.8 495.5 793.8C498.7 793.8 500.4 837.6 503.6 837.6C506.9 837.6 508.5 760.9 511.8 760.9C515.0 760.9 516.7 870.5 519.9 870.5C523.2 870.5 524.8 809.1 528.1 771.9C531.3 734.6 533.0 684.2 536.2 684.2C539.5 684.2 541.1 684.2 544.4 706.1C547.6 728.0 549.3 859.5 552.5 859.5H560.7C563.9 859.5 565.6 870.5 568.8 870.5H577.0C580.3 870.5 581.9 870.5 585.1 859.5C588.4 848.6 590.0 793.8 593.3 793.8C596.6 793.8 598.2 859.5 601.4 859.5H609.6H617.8C621.0 859.5 622.6 870.5 625.9 870.5H634.1C637.3 870.5 639.0 870.5 642.2 859.5C645.5 848.6 647.1 846.4 650.4 804.7C653.6 763.1 655.3 651.3 658.5 651.3C661.8 651.3 663.4 859.5 666.7 859.5C669.9 859.5 671.6 837.6 674.8 815.7C678.1 793.8 679.7 749.9 683.0 749.9C686.2 749.9 687.9 765.3 691.1 771.9C694.4 778.4 696.0 771.9 699.3 782.8C702.5 793.8 704.2 826.7 707.4 826.7C710.7 826.7 712.3 793.8 715.6 782.8C718.9 771.9 720.5 771.9 723.7 771.9C727.0 771.9 728.6 809.1 731.9 826.7C735.2 844.2 736.8 859.5 740.0 859.5C743.3 859.5 744.9 859.5 748.2 848.6C751.5 837.6 753.1 760.9 756.4 760.9C759.6 760.9 761.2 826.7 764.5 826.7C767.8 826.7 769.4 739.0 772.7 739.0C775.9 739.0 777.6 859.5 780.8 859.5H789.0C792.2 859.5 793.9 846.4 797.1 837.6C800.4 828.9 802.0 815.7 805.3 815.7C808.5 815.7 810.2 828.9 813.4 837.6C816.7 846.4 818.3 859.5 821.6 859.5C824.8 859.5 826.5 850.8 829.7 837.6C833.0 824.5 834.6 793.8 837.9 793.8C841.1 793.8 842.8 824.5 846.0 837.6C849.3 850.8 850.9 859.5 854.2 859.5C857.5 859.5 859.1 837.6 862.3 837.6C865.6 837.6 867.2 870.5 870.5 870.5C873.8 870.5 875.4 868.3 878.7 859.5C881.9 850.8 883.5 826.7 886.8 826.7C890.1 826.7 891.7 831.0 895.0 837.6C898.2 844.2 899.8 859.5 903.1 859.5H911.3C914.5 859.5 916.2 804.7 919.4 804.7C922.7 804.7 924.3 859.5 927.6 859.5C930.8 859.5 932.5 815.7 935.7 815.7C939.0 815.7 940.6 859.5 943.9 859.5H952.0C955.3 859.5 956.9 782.8 960.2 782.8C963.4 782.8 965.1 809.1 968.3 826.7C971.6 844.2 973.2 870.5 976.5 870.5C979.7 870.5 981.4 848.6 984.6 848.6H992.8H1000.9C1004.2 848.6 1005.8 804.7 1009.1 804.7H1017.3C1020.5 804.7 1022.1 837.6 1025.4 837.6C1028.7 837.6 1030.3 815.7 1033.6 804.7C1036.8 793.8 1038.4 782.8 1041.7 782.8C1045.0 782.8 1046.6 859.5 1049.9 859.5C1053.1 859.5 1054.8 842.0 1058.0 826.7C1061.3 811.3 1062.9 782.8 1066.2 782.8C1069.4 782.8 1071.1 820.1 1074.3 837.6C1077.6 855.2 1079.2 870.5 1082.5 870.5H1090.6C1093.9 870.5 1095.5 859.5 1098.8 859.5H1106.9C1110.2 859.5 1111.8 815.7 1115.1 815.7C1118.3 815.7 1120.0 859.5 1123.2 859.5H1131.4C1134.7 859.5 1136.3 835.4 1139.5 826.7C1142.8 817.9 1144.4 815.7 1147.7 815.7C1151.0 815.7 1152.6 859.5 1155.9 859.5C1159.1 859.5 1160.7 835.4 1164.0 826.7C1167.3 817.9 1168.9 815.7 1172.2 815.7C1175.4 815.7 1177.1 859.5 1180.3 859.5H1188.5C1191.7 859.5 1193.4 826.7 1196.6 826.7C1199.9 826.7 1201.5 859.5 1204.8 859.5C1208.0 859.5 1209.7 859.5 1212.9 848.6C1216.2 837.6 1217.8 804.7 1221.1 804.7C1224.3 804.7 1226.0 820.1 1229.2 826.7C1232.5 833.2 1234.1 831.0 1237.4 837.6C1240.6 844.2 1242.3 853.0 1245.5 859.5C1248.8 866.1 1250.4 870.5 1253.7 870.5C1257.0 870.5 1258.6 859.5 1261.8 859.5H1270.0H1278.1C1281.4 859.5 1283.0 826.7 1286.3 826.7C1289.6 826.7 1291.2 870.5 1294.5 870.5H1302.6H1310.8H1318.9C1322.2 870.5 1323.8 859.5 1327.1 859.5H1335.2H1343.4H1351.5H1359.7C1362.9 859.5 1364.6 870.5 1367.8 870.5H1376.0C1379.2 870.5 1380.9 859.5 1384.1 859.5H1392.3H1400.4C1403.7 859.5 1405.3 771.9 1408.6 771.9C1411.9 771.9 1413.5 817.9 1416.7 837.6C1420.0 857.3 1421.6 870.5 1424.9 870.5C1428.2 870.5 1429.8 859.5 1433.1 859.5H1441.2H1449.4C1452.6 859.5 1454.3 848.6 1457.5 837.6C1460.8 826.7 1462.4 813.5 1465.7 804.7C1468.9 796.0 1470.6 793.8 1473.8 793.8C1477.1 793.8 1478.7 859.5 1482.0 859.5H1490.1H1498.3H1506.4H1514.6H1522.7C1526.0 859.5 1527.6 771.9 1530.9 771.9C1534.2 771.9 1535.8 848.6 1539.0 859.5C1542.3 870.5 1543.9 870.5 1547.2 870.5C1550.5 870.5 1552.1 863.9 1555.3 848.6C1558.6 833.2 1560.2 793.8 1563.5 793.8C1566.8 793.8 1568.4 837.6 1571.7 848.6C1574.9 859.5 1576.5 859.5 1579.8 859.5H1588.0H1596.1C1599.4 859.5 1601.0 870.5 1604.3 870.5C1607.5 870.5 1609.2 815.7 1612.4 815.7C1615.7 815.7 1617.3 859.5 1620.6 859.5H1628.7H1636.9H1645.0H1653.2C1656.4 859.5 1658.1 870.5 1661.3 870.5C1664.6 870.5 1666.2 859.5 1669.5 859.5H1677.6H1685.8" fill="none" stroke="#10457b" stroke-width="2" stroke-linejoin="round" stroke-linecap="round"/>
<path d="M332.4 804.7h0M340.6 804.7h0M365.0 760.9h0M373.2 793.8h0M381.3 848.6h0M397.6 837.6h0M405.8 848.6h0M422.1 804.7h0M454.7 804.7h0M471.0 739.0h0M479.2 837.6h0M487.3 804.7h0M495.5 793.8h0M503.6 837.6h0M511.8 760.9h0M528.1 771.9h0M536.2 684.2h0M544.4 706.1h0M593.3 793.8h0M650.4 804.7h0M658.5 651.3h0M674.8 815.7h0M683.0 749.9h0M691.1 771.9h0M699.3 782.8h0M707.4 826.7h0M715.6 782.8h0M723.7 771.9h0M731.9 826.7h0M756.4 760.9h0M764.5 826.7h0M772.7 739.0h0M797.1 837.6h0M805.3 815.7h0M813.4 837.6h0M829.7 837.6h0M837.9 793.8h0M846.0 837.6h0M862.3 837.6h0M886.8 826.7h0M895.0 837.6h0M919.4 804.7h0M935.7 815.7h0M960.2 782.8h0M968.3 826.7h0M984.6 848.6h0M992.8 848.6h0M1000.9 848.6h0M1009.1 804.7h0M1017.3 804.7h0M1025.4 837.6h0M1033.6 804.7h0M1041.7 782.8h0M1058.0 826.7h0M1066.2 782.8h0M1074.3 837.6h0M1115.1 815.7h0M1139.5 826.7h0M1147.7 815.7h0M1164.0 826.7h0M1172.2 815.7h0M1196.6 826.7h0M1212.9 848.6h0M1221.1 804.7h0M1229.2 826.7h0M1237.4 837.6h0M1286.3 826.7h0M1408.6 771.9h0M1416.7 837.6h0M1457.5 837.6h0M1465.7 804.7h0M1473.8 793.8h0M1530.9 771.9h0M1555.3 848.6h0M1563.5 793.8h0M1571.7 848.6h0M1612.4 815.7h0" fill="none" stroke="#10457b" stroke-width="7.5" stroke-linecap="round"/>
<path d="M332.4 782.8C332.4 782.8 337.3 749.9 340.6 749.9C343.8 749.9 345.4 870.5 348.7 870.5C352.0 870.5 353.6 870.5 356.9 859.5C360.1 848.6 361.8 629.4 365.0 629.4C368.3 629.4 369.9 771.9 373.2 782.8C376.4 793.8 378.1 782.8 381.3 793.8C384.6 804.7 386.2 859.5 389.5 859.5C392.7 859.5 394.4 826.7 397.6 826.7H405.8C409.0 826.7 410.7 859.5 413.9 859.5C417.2 859.5 418.8 771.9 422.1 771.9C425.3 771.9 427.0 870.5 430.2 870.5H438.4C441.7 870.5 443.3 809.1 446.5 782.8C449.8 756.5 451.4 739.0 454.7 739.0C458.0 739.0 459.6 870.5 462.8 870.5C466.1 870.5 467.7 728.0 471.0 728.0C474.3 728.0 475.9 826.7 479.2 826.7C482.4 826.7 484.0 782.8 487.3 782.8H495.5C498.7 782.8 500.4 815.7 503.6 815.7C506.9 815.7 508.5 684.2 511.8 684.2C515.0 684.2 516.7 870.5 519.9 870.5C523.2 870.5 524.8 758.7 528.1 717.1C531.3 675.4 533.0 686.4 536.2 662.3C539.5 638.1 541.1 596.5 544.4 596.5C547.6 596.5 549.3 859.5 552.5 859.5C555.8 859.5 557.4 771.9 560.7 771.9C563.9 771.9 565.6 870.5 568.8 870.5H577.0C580.3 870.5 581.9 793.8 585.1 793.8C588.4 793.8 590.0 796.0 593.3 804.7C596.6 813.5 598.2 837.6 601.4 837.6C604.7 837.6 606.3 815.7 609.6 815.7C612.9 815.7 614.5 826.7 617.8 837.6C621.0 848.6 622.6 870.5 625.9 870.5H634.1C637.3 870.5 639.0 866.1 642.2 848.6C645.5 831.0 647.1 826.7 650.4 782.8C653.6 739.0 655.3 629.4 658.5 629.4C661.8 629.4 663.4 837.6 666.7 837.6C669.9 837.6 671.6 826.7 674.8 804.7C678.1 782.8 679.7 728.0 683.0 728.0C686.2 728.0 687.9 734.6 691.1 739.0C694.4 743.4 696.0 743.4 699.3 749.9C702.5 756.5 704.2 771.9 707.4 771.9H715.6C718.9 771.9 720.5 618.4 723.7 618.4C727.0 618.4 728.6 745.6 731.9 793.8C735.2 842.0 736.8 859.5 740.0 859.5C743.3 859.5 744.9 859.5 748.2 837.6C751.5 815.7 753.1 651.3 756.4 651.3C759.6 651.3 761.2 760.9 764.5 760.9C767.8 760.9 769.4 574.6 772.7 574.6C775.9 574.6 777.6 714.9 780.8 771.9C784.1 828.9 785.7 859.5 789.0 859.5C792.2 859.5 793.9 848.6 797.1 826.7C800.4 804.7 802.0 749.9 805.3 749.9C808.5 749.9 810.2 796.0 813.4 815.7C816.7 835.4 818.3 848.6 821.6 848.6C824.8 848.6 826.5 839.8 829.7 815.7C833.0 791.6 834.6 728.0 837.9 728.0C841.1 728.0 842.8 804.7 846.0 826.7C849.3 848.6 850.9 848.6 854.2 848.6C857.5 848.6 859.1 815.7 862.3 815.7C865.6 815.7 867.2 870.5 870.5 870.5C873.8 870.5 875.4 870.5 878.7 859.5C881.9 848.6 883.5 815.7 886.8 815.7H895.0C898.2 815.7 899.8 820.1 903.1 826.7C906.4 833.2 908.0 848.6 911.3 848.6C914.5 848.6 916.2 782.8 919.4 782.8C922.7 782.8 924.3 826.7 927.6 826.7C930.8 826.7 932.5 771.9 935.7 771.9C939.0 771.9 940.6 837.6 943.9 837.6C947.1 837.6 948.8 831.0 952.0 815.7C955.3 800.4 956.9 760.9 960.2 760.9C963.4 760.9 965.1 793.8 968.3 815.7C971.6 837.6 973.2 870.5 976.5 870.5C979.7 870.5 981.4 846.4 984.6 837.6C987.9 828.9 989.5 837.6 992.8 826.7C996.1 815.7 997.7 796.0 1000.9 782.8C1004.2 769.7 1005.8 760.9 1009.1 760.9C1012.4 760.9 1014.0 760.9 1017.3 771.9C1020.5 782.8 1022.1 815.7 1025.4 815.7C1028.7 815.7 1030.3 774.1 1033.6 749.9C1036.8 725.8 1038.4 695.1 1041.7 695.1C1045.0 695.1 1046.6 804.7 1049.9 804.7C1053.1 804.7 1054.8 793.8 1058.0 782.8C1061.3 771.9 1062.9 749.9 1066.2 749.9C1069.4 749.9 1071.1 802.5 1074.3 826.7C1077.6 850.8 1079.2 870.5 1082.5 870.5H1090.6C1093.9 870.5 1095.5 815.7 1098.8 815.7C1102.0 815.7 1103.7 826.7 1106.9 826.7C1110.2 826.7 1111.8 804.7 1115.1 804.7C1118.3 804.7 1120.0 837.6 1123.2 837.6C1126.5 837.6 1128.1 824.5 1131.4 815.7C1134.7 806.9 1136.3 793.8 1139.5 793.8H1147.7C1151.0 793.8 1152.6 859.5 1155.9 859.5C1159.1 859.5 1160.7 826.7 1164.0 815.7C1167.3 804.7 1168.9 804.7 1172.2 804.7C1175.4 804.7 1177.1 848.6 1180.3 848.6H1188.5C1191.7 848.6 1193.4 815.7 1196.6 815.7C1199.9 815.7 1201.5 826.7 1204.8 826.7H1212.9C1216.2 826.7 1217.8 782.8 1221.1 782.8C1224.3 782.8 1226.0 815.7 1229.2 815.7C1232.5 815.7 1234.1 782.8 1237.4 782.8C1240.6 782.8 1242.3 787.2 1245.5 804.7C1248.8 822.3 1250.4 870.5 1253.7 870.5C1257.0 870.5 1258.6 804.7 1261.8 804.7H1270.0C1273.3 804.7 1274.9 782.8 1278.1 782.8C1281.4 782.8 1283.0 787.2 1286.3 804.7C1289.6 822.3 1291.2 870.5 1294.5 870.5H1302.6H1310.8H1318.9C1322.2 870.5 1323.8 760.9 1327.1 760.9C1330.3 760.9 1332.0 837.6 1335.2 837.6C1338.5 837.6 1340.1 739.0 1343.4 739.0C1346.6 739.0 1348.3 776.2 1351.5 793.8C1354.8 811.3 1356.4 811.3 1359.7 826.7C1362.9 842.0 1364.6 870.5 1367.8 870.5H1376.0C1379.2 870.5 1380.9 826.7 1384.1 826.7C1387.4 826.7 1389.0 837.6 1392.3 837.6C1395.6 837.6 1397.2 837.6 1400.4 826.7C1403.7 815.7 1405.3 728.0 1408.6 728.0C1411.9 728.0 1413.5 798.2 1416.7 826.7C1420.0 855.2 1421.6 870.5 1424.9 870.5C1428.2 870.5 1429.8 826.7 1433.1 815.7C1436.3 804.7 1437.9 804.7 1441.2 804.7C1444.5 804.7 1446.1 826.7 1449.4 826.7C1452.6 826.7 1454.3 822.3 1457.5 815.7C1460.8 809.1 1462.4 800.4 1465.7 793.8C1468.9 787.2 1470.6 782.8 1473.8 782.8C1477.1 782.8 1478.7 859.5 1482.0 859.5C1485.2 859.5 1486.9 848.6 1490.1 848.6H1498.3H1506.4C1509.7 848.6 1511.3 837.6 1514.6 837.6C1517.8 837.6 1519.5 848.6 1522.7 848.6C1526.0 848.6 1527.6 717.1 1530.9 717.1C1534.2 717.1 1535.8 848.6 1539.0 859.5C1542.3 870.5 1543.9 870.5 1547.2 870.5C1550.5 870.5 1552.1 793.8 1555.3 782.8C1558.6 771.9 1560.2 782.8 1563.5 771.9C1566.8 760.9 1568.4 728.0 1571.7 728.0C1574.9 728.0 1576.5 815.7 1579.8 837.6C1583.1 859.5 1584.7 859.5 1588.0 859.5H1596.1C1599.4 859.5 1601.0 870.5 1604.3 870.5C1607.5 870.5 1609.2 804.7 1612.4 804.7C1615.7 804.7 1617.3 837.6 1620.6 848.6C1623.8 859.5 1625.5 859.5 1628.7 859.5H1636.9H1645.0C1648.3 859.5 1649.9 848.6 1653.2 848.6C1656.4 848.6 1658.1 870.5 1661.3 870.5C1664.6 870.5 1666.2 866.1 1669.5 859.5C1672.8 853.0 1674.4 844.2 1677.6 837.6C1680.9 831.0 1685.8 826.7 1685.8 826.7" fill="none" stroke="#0b2d54" stroke-width="2" stroke-linejoin="round" stroke-linecap="round"/>
<path d="M332.4 782.8h0M340.6 749.9h0M356.9 859.5h0M365.0 629.4h0M373.2 782.8h0M381.3 793.8h0M397.6 826.7h0M405.8 826.7h0M422.1 771.9h0M446.5 782.8h0M454.7 739.0h0M471.0 728.0h0M479.2 826.7h0M487.3 782.8h0M495.5 782.8h0M503.6 815.7h0M511.8 684.2h0M528.1 717.1h0M536.2 662.3h0M544.4 596.5h0M560.7 771.9h0M585.1 793.8h0M593.3 804.7h0M601.4 837.6h0M609.6 815.7h0M617.8 837.6h0M642.2 848.6h0M650.4 782.8h0M658.5 629.4h0M666.7 837.6h0M674.8 804.7h0M683.0 728.0h0M691.1 739.0h0M699.3 749.9h0M707.4 771.9h0M715.6 771.9h0M723.7 618.4h0M731.9 793.8h0M740.0 859.5h0M748.2 837.6h0M756.4 651.3h0M764.5 760.9h0M772.7 574.6h0M780.8 771.9h0M789.0 859.5h0M797.1 826.7h0M805.3 749.9h0M813.4 815.7h0M821.6 848.6h0M829.7 815.7h0M837.9 728.0h0M846.0 826.7h0M854.2 848.6h0M862.3 815.7h0M878.7 859.5h0M886.8 815.7h0M895.0 815.7h0M903.1 826.7h0M911.3 848.6h0M919.4 782.8h0M927.6 826.7h0M935.7 771.9h0M943.9 837.6h0M952.0 815.7h0M960.2 760.9h0M968.3 815.7h0M984.6 837.6h0M992.8 826.7h0M1000.9 782.8h0M1009.1 760.9h0M1017.3 771.9h0M1025.4 815.7h0M1033.6 749.9h0M1041.7 695.1h0M1049.9 804.7h0M1058.0 782.8h0M1066.2 749.9h0M1074.3 826.7h0M1098.8 815.7h0M1106.9 826.7h0M1115.1 804.7h0M1123.2 837.6h0M1131.4 815.7h0M1139.5 793.8h0M1147.7 793.8h0M1155.9 859.5h0M1164.0 815.7h0M1172.2 804.7h0M1180.3 848.6h0M1188.5 848.6h0M1196.6 815.7h0M1204.8 826.7h0M1212.9 826.7h0M1221.1 782.8h0M1229.2 815.7h0M1237.4 782.8h0M1245.5 804.7h0M1261.8 804.7h0M1270.0 804.7h0M1278.1 782.8h0M1286.3 804.7h0M1327.1 760.9h0M1335.2 837.6h0M1343.4 739.0h0M1351.5 793.8h0M1359.7 826.7h0M1384.1 826.7h0M1392.3 837.6h0M1400.4 826.7h0M1408.6 728.0h0M1416.7 826.7h0M1433.1 815.7h0M1441.2 804.7h0M1449.4 826.7h0M1457.5 815.7h0M1465.7 793.8h0M1473.8 782.8h0M1490.1 848.6h0M1498.3 848.6h0M1506.4 848.6h0M1514.6 837.6h0M1522.7 848.6h0M1530.9 717.1h0M1555.3 782.8h0M1563.5 771.9h0M1571.7 728.0h0M1579.8 837.6h0M1612.4 804.7h0M1620.6 848.6h0M1653.2 848.6h0M1677.6 837.6h0M1685.8 826.7h0" fill="none" stroke="#0b2d54" stroke-width="7.5" stroke-linecap="round"/>
<path d="M332.4 859.5C332.4 859.5 337.3 848.6 340.6 848.6C343.8 848.6 345.4 870.5 348.7 870.5C352.0 870.5 353.6 859.5 356.9 859.5H365.0C368.3 859.5 369.9 848.6 373.2 848.6C376.4 848.6 378.1 859.5 381.3 859.5H389.5H397.6H405.8H413.9H422.1C425.3 859.5 427.0 870.5 430.2 870.5H438.4C441.7 870.5 443.3 859.5 446.5 859.5H454.7C458.0 859.5 459.6 870.5 462.8 870.5C466.1 870.5 467.7 848.6 471.0 848.6C474.3 848.6 475.9 859.5 479.2 859.5H487.3H495.5H503.6H511.8C515.0 859.5 516.7 870.5 519.9 870.5C523.2 870.5 524.8 848.6 528.1 848.6C531.3 848.6 533.0 859.5 536.2 859.5C539.5 859.5 541.1 826.7 544.4 826.7C547.6 826.7 549.3 859.5 552.5 859.5H560.7C563.9 859.5 565.6 870.5 568.8 870.5H577.0C580.3 870.5 581.9 859.5 585.1 859.5H593.3H601.4H609.6H617.8C621.0 859.5 622.6 870.5 625.9 870.5H634.1C637.3 870.5 639.0 863.9 642.2 859.5C645.5 855.2 647.1 848.6 650.4 848.6C653.6 848.6 655.3 859.5 658.5 859.5H666.7H674.8C678.1 859.5 679.7 837.6 683.0 837.6C686.2 837.6 687.9 848.6 691.1 848.6C694.4 848.6 696.0 826.7 699.3 826.7C702.5 826.7 704.2 859.5 707.4 859.5C710.7 859.5 712.3 837.6 715.6 837.6C718.9 837.6 720.5 859.5 723.7 859.5H731.9C735.2 859.5 736.8 848.6 740.0 848.6H748.2C751.5 848.6 753.1 859.5 756.4 859.5H764.5H772.7H780.8H789.0H797.1C800.4 859.5 802.0 848.6 805.3 848.6C808.5 848.6 810.2 859.5 813.4 859.5H821.6H829.7C833.0 859.5 834.6 826.7 837.9 826.7C841.1 826.7 842.8 859.5 846.0 859.5H854.2H862.3C865.6 859.5 867.2 870.5 870.5 870.5C873.8 870.5 875.4 848.6 878.7 848.6C881.9 848.6 883.5 859.5 886.8 859.5C890.1 859.5 891.7 848.6 895.0 848.6C898.2 848.6 899.8 859.5 903.1 859.5H911.3H919.4H927.6H935.7H943.9H952.0H960.2H968.3C971.6 859.5 973.2 870.5 976.5 870.5C979.7 870.5 981.4 859.5 984.6 859.5H992.8H1000.9C1004.2 859.5 1005.8 853.0 1009.1 848.6C1012.4 844.2 1014.0 837.6 1017.3 837.6C1020.5 837.6 1022.1 848.6 1025.4 848.6C1028.7 848.6 1030.3 837.6 1033.6 837.6H1041.7C1045.0 837.6 1046.6 859.5 1049.9 859.5H1058.0H1066.2H1074.3C1077.6 859.5 1079.2 870.5 1082.5 870.5H1090.6C1093.9 870.5 1095.5 859.5 1098.8 859.5H1106.9C1110.2 859.5 1111.8 837.6 1115.1 837.6C1118.3 837.6 1120.0 859.5 1123.2 859.5H1131.4H1139.5H1147.7C1151.0 859.5 1152.6 848.6 1155.9 848.6C1159.1 848.6 1160.7 859.5 1164.0 859.5C1167.3 859.5 1168.9 848.6 1172.2 848.6C1175.4 848.6 1177.1 859.5 1180.3 859.5H1188.5C1191.7 859.5 1193.4 848.6 1196.6 848.6C1199.9 848.6 1201.5 859.5 1204.8 859.5H1212.9H1221.1H1229.2H1237.4H1245.5C1248.8 859.5 1250.4 870.5 1253.7 870.5C1257.0 870.5 1258.6 859.5 1261.8 859.5H1270.0H1278.1H1286.3C1289.6 859.5 1291.2 870.5 1294.5 870.5H1302.6H1310.8H1318.9C1322.2 870.5 1323.8 859.5 1327.1 859.5H1335.2H1343.4H1351.5H1359.7C1362.9 859.5 1364.6 870.5 1367.8 870.5H1376.0C1379.2 870.5 1380.9 859.5 1384.1 859.5H1392.3H1400.4H1408.6H1416.7C1420.0 859.5 1421.6 870.5 1424.9 870.5C1428.2 870.5 1429.8 859.5 1433.1 859.5H1441.2H1449.4H1457.5H1465.7H1473.8H1482.0H1490.1H1498.3H1506.4H1514.6H1522.7H1530.9H1539.0C1542.3 859.5 1543.9 870.5 1547.2 870.5C1550.5 870.5 1552.1 859.5 1555.3 859.5H1563.5H1571.7H1579.8H1588.0H1596.1C1599.4 859.5 1601.0 870.5 1604.3 870.5C1607.5 870.5 1609.2 859.5 1612.4 859.5H1620.6H1628.7H1636.9H1645.0H1653.2C1656.4 859.5 1658.1 870.5 1661.3 870.5C1664.6 870.5 1666.2 859.5 1669.5 859.5H1677.6H1685.8" fill="none" stroke="#1668b8" stroke-width="2" stroke-linejoin="round" stroke-linecap="round"/>
<path d="M870.5 870.5h0M1310.8 870.5h0" fill="none" stroke="#1668b8" stroke-width="7.5" stroke-linecap="round"/>
<path d="M340.6 848.6C340.6 848.6 345.4 870.5 348.7 870.5H356.9C360.1 870.5 361.8 848.6 365.0 848.6H373.2C376.4 848.6 378.1 859.5 381.3 859.5H389.5C392.7 859.5 394.4 870.5 397.6 870.5H405.8H413.9C417.2 870.5 418.8 859.5 422.1 859.5C425.3 859.5 427.0 870.5 430.2 870.5H438.4C441.7 870.5 443.3 859.5 446.5 859.5H454.7C458.0 859.5 459.6 870.5 462.8 870.5C466.1 870.5 467.7 848.6 471.0 848.6C474.3 848.6 475.9 859.5 479.2 859.5H487.3H495.5H503.6H511.8C515.0 859.5 516.7 870.5 519.9 870.5C523.2 870.5 524.8 848.6 528.1 848.6C531.3 848.6 533.0 859.5 536.2 859.5C539.5 859.5 541.1 826.7 544.4 826.7C547.6 826.7 549.3 859.5 552.5 859.5H560.7C563.9 859.5 565.6 870.5 568.8 870.5H577.0C580.3 870.5 581.9 859.5 585.1 859.5H593.3C596.6 859.5 598.2 848.6 601.4 848.6C604.7 848.6 606.3 859.5 609.6 859.5H617.8C621.0 859.5 622.6 870.5 625.9 870.5H634.1C637.3 870.5 639.0 866.1 642.2 859.5C645.5 853.0 647.1 837.6 650.4 837.6C653.6 837.6 655.3 859.5 658.5 859.5H666.7H674.8C678.1 859.5 679.7 837.6 683.0 837.6C686.2 837.6 687.9 848.6 691.1 848.6C694.4 848.6 696.0 826.7 699.3 826.7C702.5 826.7 704.2 859.5 707.4 859.5C710.7 859.5 712.3 837.6 715.6 837.6C718.9 837.6 720.5 859.5 723.7 859.5H731.9C735.2 859.5 736.8 848.6 740.0 848.6H748.2C751.5 848.6 753.1 859.5 756.4 859.5H764.5H772.7H780.8H789.0H797.1C800.4 859.5 802.0 848.6 805.3 848.6C808.5 848.6 810.2 859.5 813.4 859.5H821.6H829.7C833.0 859.5 834.6 826.7 837.9 826.7C841.1 826.7 842.8 859.5 846.0 859.5H854.2H862.3H870.5C873.8 859.5 875.4 848.6 878.7 848.6C881.9 848.6 883.5 859.5 886.8 859.5C890.1 859.5 891.7 848.6 895.0 848.6C898.2 848.6 899.8 859.5 903.1 859.5H911.3H919.4H927.6H935.7H943.9C947.1 859.5 948.8 848.6 952.0 848.6C955.3 848.6 956.9 859.5 960.2 859.5H968.3C971.6 859.5 973.2 870.5 976.5 870.5C979.7 870.5 981.4 859.5 984.6 859.5H992.8H1000.9C1004.2 859.5 1005.8 853.0 1009.1 848.6C1012.4 844.2 1014.0 837.6 1017.3 837.6C1020.5 837.6 1022.1 848.6 1025.4 848.6C1028.7 848.6 1030.3 837.6 1033.6 837.6H1041.7C1045.0 837.6 1046.6 859.5 1049.9 859.5H1058.0H1066.2H1074.3C1077.6 859.5 1079.2 870.5 1082.5 870.5H1090.6C1093.9 870.5 1095.5 859.5 1098.8 859.5H1106.9C1110.2 859.5 1111.8 837.6 1115.1 837.6C1118.3 837.6 1120.0 859.5 1123.2 859.5H1131.4H1139.5H1147.7C1151.0 859.5 1152.6 848.6 1155.9 848.6C1159.1 848.6 1160.7 859.5 1164.0 859.5C1167.3 859.5 1168.9 848.6 1172.2 848.6C1175.4 848.6 1177.1 859.5 1180.3 859.5H1188.5C1191.7 859.5 1193.4 848.6 1196.6 848.6C1199.9 848.6 1201.5 859.5 1204.8 859.5C1208.0 859.5 1209.7 837.6 1212.9 837.6C1216.2 837.6 1217.8 859.5 1221.1 859.5C1224.3 859.5 1226.0 782.8 1229.2 782.8C1232.5 782.8 1234.1 859.5 1237.4 859.5H1245.5C1248.8 859.5 1250.4 870.5 1253.7 870.5C1257.0 870.5 1258.6 859.5 1261.8 859.5H1270.0C1273.3 859.5 1274.9 837.6 1278.1 837.6C1281.4 837.6 1283.0 853.0 1286.3 859.5C1289.6 866.1 1291.2 870.5 1294.5 870.5H1302.6C1305.9 870.5 1307.5 859.5 1310.8 859.5C1314.0 859.5 1315.7 870.5 1318.9 870.5C1322.2 870.5 1323.8 826.7 1327.1 826.7C1330.3 826.7 1332.0 848.6 1335.2 848.6H1343.4H1351.5C1354.8 848.6 1356.4 855.2 1359.7 859.5C1362.9 863.9 1364.6 870.5 1367.8 870.5H1376.0C1379.2 870.5 1380.9 859.5 1384.1 859.5H1392.3H1400.4H1408.6H1416.7C1420.0 859.5 1421.6 870.5 1424.9 870.5C1428.2 870.5 1429.8 848.6 1433.1 848.6C1436.3 848.6 1437.9 859.5 1441.2 859.5H1449.4H1457.5C1460.8 859.5 1462.4 837.6 1465.7 837.6C1468.9 837.6 1470.6 859.5 1473.8 859.5H1482.0H1490.1H1498.3H1506.4C1509.7 859.5 1511.3 848.6 1514.6 848.6C1517.8 848.6 1519.5 859.5 1522.7 859.5H1530.9H1539.0C1542.3 859.5 1543.9 870.5 1547.2 870.5C1550.5 870.5 1552.1 863.9 1555.3 859.5C1558.6 855.2 1560.2 848.6 1563.5 848.6C1566.8 848.6 1568.4 859.5 1571.7 859.5H1579.8H1588.0H1596.1C1599.4 859.5 1601.0 870.5 1604.3 870.5C1607.5 870.5 1609.2 859.5 1612.4 859.5H1620.6H1628.7H1636.9H1645.0H1653.2C1656.4 859.5 1658.1 870.5 1661.3 870.5C1664.6 870.5 1666.2 859.5 1669.5 859.5H1677.6H1685.8" fill="none" stroke="#6b6a18" stroke-width="2" stroke-linejoin="round" stroke-linecap="round"/>
<path d="M340.6 848.6C340.6 848.6 345.4 870.5 348.7 870.5H356.9C360.1 870.5 361.8 804.7 365.0 804.7C368.3 804.7 369.9 837.6 373.2 848.6C376.4 859.5 378.1 859.5 381.3 859.5H389.5C392.7 859.5 394.4 870.5 397.6 870.5H405.8H413.9C417.2 870.5 418.8 859.5 422.1 859.5C425.3 859.5 427.0 870.5 430.2 870.5H438.4C441.7 870.5 443.3 859.5 446.5 859.5H454.7C458.0 859.5 459.6 870.5 462.8 870.5C466.1 870.5 467.7 848.6 471.0 848.6C474.3 848.6 475.9 859.5 479.2 859.5H487.3H495.5H503.6H511.8C515.0 859.5 516.7 870.5 519.9 870.5C523.2 870.5 524.8 848.6 528.1 848.6C531.3 848.6 533.0 859.5 536.2 859.5C539.5 859.5 541.1 826.7 544.4 826.7C547.6 826.7 549.3 859.5 552.5 859.5H560.7C563.9 859.5 565.6 870.5 568.8 870.5H577.0C580.3 870.5 581.9 859.5 585.1 859.5H593.3C596.6 859.5 598.2 848.6 601.4 848.6C604.7 848.6 606.3 859.5 609.6 859.5H617.8C621.0 859.5 622.6 870.5 625.9 870.5H634.1C637.3 870.5 639.0 866.1 642.2 859.5C645.5 853.0 647.1 837.6 650.4 837.6C653.6 837.6 655.3 859.5 658.5 859.5H666.7H674.8C678.1 859.5 679.7 837.6 683.0 837.6C686.2 837.6 687.9 848.6 691.1 848.6C694.4 848.6 696.0 826.7 699.3 826.7C702.5 826.7 704.2 859.5 707.4 859.5C710.7 859.5 712.3 837.6 715.6 837.6C718.9 837.6 720.5 859.5 723.7 859.5H731.9C735.2 859.5 736.8 848.6 740.0 848.6H748.2C751.5 848.6 753.1 837.6 756.4 837.6C759.6 837.6 761.2 859.5 764.5 859.5H772.7H780.8H789.0H797.1C800.4 859.5 802.0 848.6 805.3 848.6C808.5 848.6 810.2 859.5 813.4 859.5H821.6H829.7C833.0 859.5 834.6 826.7 837.9 826.7C841.1 826.7 842.8 859.5 846.0 859.5H854.2H862.3H870.5C873.8 859.5 875.4 848.6 878.7 848.6C881.9 848.6 883.5 859.5 886.8 859.5C890.1 859.5 891.7 848.6 895.0 848.6C898.2 848.6 899.8 859.5 903.1 859.5H911.3H919.4H927.6H935.7H943.9H952.0H960.2H968.3C971.6 859.5 973.2 870.5 976.5 870.5C979.7 870.5 981.4 859.5 984.6 859.5H992.8H1000.9C1004.2 859.5 1005.8 853.0 1009.1 848.6C1012.4 844.2 1014.0 837.6 1017.3 837.6C1020.5 837.6 1022.1 848.6 1025.4 848.6C1028.7 848.6 1030.3 837.6 1033.6 837.6H1041.7C1045.0 837.6 1046.6 859.5 1049.9 859.5H1058.0H1066.2H1074.3C1077.6 859.5 1079.2 870.5 1082.5 870.5H1090.6C1093.9 870.5 1095.5 859.5 1098.8 859.5H1106.9C1110.2 859.5 1111.8 837.6 1115.1 837.6C1118.3 837.6 1120.0 859.5 1123.2 859.5H1131.4H1139.5H1147.7C1151.0 859.5 1152.6 848.6 1155.9 848.6C1159.1 848.6 1160.7 859.5 1164.0 859.5C1167.3 859.5 1168.9 848.6 1172.2 848.6C1175.4 848.6 1177.1 859.5 1180.3 859.5H1188.5C1191.7 859.5 1193.4 848.6 1196.6 848.6C1199.9 848.6 1201.5 859.5 1204.8 859.5C1208.0 859.5 1209.7 837.6 1212.9 837.6C1216.2 837.6 1217.8 859.5 1221.1 859.5C1224.3 859.5 1226.0 782.8 1229.2 782.8C1232.5 782.8 1234.1 859.5 1237.4 859.5C1240.6 859.5 1242.3 848.6 1245.5 848.6C1248.8 848.6 1250.4 870.5 1253.7 870.5C1257.0 870.5 1258.6 859.5 1261.8 859.5H1270.0C1273.3 859.5 1274.9 837.6 1278.1 837.6C1281.4 837.6 1283.0 842.0 1286.3 848.6C1289.6 855.2 1291.2 870.5 1294.5 870.5H1302.6C1305.9 870.5 1307.5 859.5 1310.8 859.5C1314.0 859.5 1315.7 870.5 1318.9 870.5C1322.2 870.5 1323.8 826.7 1327.1 826.7C1330.3 826.7 1332.0 848.6 1335.2 848.6C1338.5 848.6 1340.1 837.6 1343.4 837.6H1351.5C1354.8 837.6 1356.4 842.0 1359.7 848.6C1362.9 855.2 1364.6 870.5 1367.8 870.5H1376.0C1379.2 870.5 1380.9 859.5 1384.1 859.5H1392.3C1395.6 859.5 1397.2 848.6 1400.4 848.6C1403.7 848.6 1405.3 859.5 1408.6 859.5H1416.7C1420.0 859.5 1421.6 870.5 1424.9 870.5C1428.2 870.5 1429.8 857.3 1433.1 848.6C1436.3 839.8 1437.9 826.7 1441.2 826.7C1444.5 826.7 1446.1 831.0 1449.4 837.6C1452.6 844.2 1454.3 859.5 1457.5 859.5H1465.7H1473.8H1482.0H1490.1H1498.3H1506.4C1509.7 859.5 1511.3 848.6 1514.6 848.6C1517.8 848.6 1519.5 859.5 1522.7 859.5H1530.9H1539.0C1542.3 859.5 1543.9 870.5 1547.2 870.5C1550.5 870.5 1552.1 863.9 1555.3 859.5C1558.6 855.2 1560.2 853.0 1563.5 848.6C1566.8 844.2 1568.4 837.6 1571.7 837.6C1574.9 837.6 1576.5 859.5 1579.8 859.5C1583.1 859.5 1584.7 848.6 1588.0 848.6C1591.2 848.6 1592.9 855.2 1596.1 859.5C1599.4 863.9 1601.0 870.5 1604.3 870.5C1607.5 870.5 1609.2 859.5 1612.4 859.5H1620.6H1628.7H1636.9H1645.0H1653.2C1656.4 859.5 1658.1 870.5 1661.3 870.5C1664.6 870.5 1666.2 848.6 1669.5 848.6C1672.8 848.6 1674.4 859.5 1677.6 859.5H1685.8" fill="none" stroke="#9a9c22" stroke-width="2" stroke-linejoin="round" stroke-linecap="round"/>
<path d="M340.6 848.6C340.6 848.6 345.4 870.5 348.7 870.5H356.9C360.1 870.5 361.8 863.9 365.0 859.5C368.3 855.2 369.9 848.6 373.2 848.6C376.4 848.6 378.1 859.5 381.3 859.5H389.5C392.7 859.5 394.4 870.5 397.6 870.5H405.8H413.9C417.2 870.5 418.8 859.5 422.1 859.5C425.3 859.5 427.0 870.5 430.2 870.5H438.4C441.7 870.5 443.3 859.5 446.5 859.5H454.7C458.0 859.5 459.6 870.5 462.8 870.5C466.1 870.5 467.7 848.6 471.0 848.6C474.3 848.6 475.9 859.5 479.2 859.5H487.3H495.5H503.6H511.8C515.0 859.5 516.7 870.5 519.9 870.5C523.2 870.5 524.8 848.6 528.1 848.6C531.3 848.6 533.0 859.5 536.2 859.5C539.5 859.5 541.1 826.7 544.4 826.7C547.6 826.7 549.3 859.5 552.5 859.5H560.7C563.9 859.5 565.6 870.5 568.8 870.5H577.0C580.3 870.5 581.9 859.5 585.1 859.5H593.3H601.4H609.6H617.8C621.0 859.5 622.6 870.5 625.9 870.5H634.1C637.3 870.5 639.0 863.9 642.2 859.5C645.5 855.2 647.1 848.6 650.4 848.6C653.6 848.6 655.3 859.5 658.5 859.5H666.7H674.8C678.1 859.5 679.7 837.6 683.0 837.6C686.2 837.6 687.9 848.6 691.1 848.6C694.4 848.6 696.0 826.7 699.3 826.7C702.5 826.7 704.2 859.5 707.4 859.5C710.7 859.5 712.3 837.6 715.6 837.6C718.9 837.6 720.5 859.5 723.7 859.5H731.9C735.2 859.5 736.8 848.6 740.0 848.6H748.2C751.5 848.6 753.1 859.5 756.4 859.5H764.5H772.7H780.8H789.0H797.1C800.4 859.5 802.0 848.6 805.3 848.6C808.5 848.6 810.2 859.5 813.4 859.5H821.6H829.7C833.0 859.5 834.6 826.7 837.9 826.7C841.1 826.7 842.8 859.5 846.0 859.5H854.2H862.3H870.5C873.8 859.5 875.4 848.6 878.7 848.6C881.9 848.6 883.5 859.5 886.8 859.5C890.1 859.5 891.7 848.6 895.0 848.6C898.2 848.6 899.8 859.5 903.1 859.5H911.3H919.4H927.6H935.7H943.9H952.0H960.2H968.3C971.6 859.5 973.2 870.5 976.5 870.5C979.7 870.5 981.4 859.5 984.6 859.5H992.8H1000.9C1004.2 859.5 1005.8 853.0 1009.1 848.6C1012.4 844.2 1014.0 837.6 1017.3 837.6C1020.5 837.6 1022.1 848.6 1025.4 848.6C1028.7 848.6 1030.3 837.6 1033.6 837.6H1041.7C1045.0 837.6 1046.6 859.5 1049.9 859.5H1058.0H1066.2H1074.3C1077.6 859.5 1079.2 870.5 1082.5 870.5H1090.6C1093.9 870.5 1095.5 859.5 1098.8 859.5H1106.9C1110.2 859.5 1111.8 837.6 1115.1 837.6C1118.3 837.6 1120.0 859.5 1123.2 859.5H1131.4H1139.5H1147.7C1151.0 859.5 1152.6 848.6 1155.9 848.6C1159.1 848.6 1160.7 859.5 1164.0 859.5C1167.3 859.5 1168.9 848.6 1172.2 848.6C1175.4 848.6 1177.1 859.5 1180.3 859.5H1188.5C1191.7 859.5 1193.4 848.6 1196.6 848.6C1199.9 848.6 1201.5 859.5 1204.8 859.5H1212.9C1216.2 859.5 1217.8 848.6 1221.1 848.6C1224.3 848.6 1226.0 859.5 1229.2 859.5H1237.4H1245.5C1248.8 859.5 1250.4 870.5 1253.7 870.5C1257.0 870.5 1258.6 859.5 1261.8 859.5H1270.0H1278.1H1286.3C1289.6 859.5 1291.2 870.5 1294.5 870.5H1302.6C1305.9 870.5 1307.5 859.5 1310.8 859.5C1314.0 859.5 1315.7 870.5 1318.9 870.5C1322.2 870.5 1323.8 859.5 1327.1 859.5H1335.2H1343.4H1351.5H1359.7C1362.9 859.5 1364.6 870.5 1367.8 870.5H1376.0C1379.2 870.5 1380.9 859.5 1384.1 859.5H1392.3H1400.4C1403.7 859.5 1405.3 837.6 1408.6 837.6C1411.9 837.6 1413.5 853.0 1416.7 859.5C1420.0 866.1 1421.6 870.5 1424.9 870.5C1428.2 870.5 1429.8 859.5 1433.1 859.5H1441.2H1449.4H1457.5H1465.7H1473.8H1482.0H1490.1H1498.3H1506.4H1514.6H1522.7H1530.9H1539.0C1542.3 859.5 1543.9 870.5 1547.2 870.5C1550.5 870.5 1552.1 859.5 1555.3 859.5H1563.5H1571.7H1579.8H1588.0H1596.1C1599.4 859.5 1601.0 870.5 1604.3 870.5C1607.5 870.5 1609.2 859.5 1612.4 859.5H1620.6H1628.7H1636.9H1645.0H1653.2C1656.4 859.5 1658.1 870.5 1661.3 870.5C1664.6 870.5 1666.2 859.5 1669.5 859.5H1677.6H1685.8" fill="none" stroke="#cfd83a" stroke-width="2" stroke-linejoin="round" stroke-linecap="round"/>
<path d="M340.6 848.6C340.6 848.6 345.4 870.5 348.7 870.5H356.9C360.1 870.5 361.8 863.9 365.0 859.5C368.3 855.2 369.9 848.6 373.2 848.6C376.4 848.6 378.1 859.5 381.3 859.5H389.5C392.7 859.5 394.4 870.5 397.6 870.5H405.8H413.9C417.2 870.5 418.8 859.5 422.1 859.5C425.3 859.5 427.0 870.5 430.2 870.5H438.4C441.7 870.5 443.3 863.9 446.5 859.5C449.8 855.2 451.4 848.6 454.7 848.6C458.0 848.6 459.6 870.5 462.8 870.5C466.1 870.5 467.7 848.6 471.0 848.6C474.3 848.6 475.9 859.5 479.2 859.5C482.4 859.5 484.0 853.0 487.3 848.6C490.6 844.2 492.2 837.6 495.5 837.6C498.7 837.6 500.4 848.6 503.6 848.6C506.9 848.6 508.5 837.6 511.8 837.6C515.0 837.6 516.7 870.5 519.9 870.5C523.2 870.5 524.8 826.7 528.1 826.7C531.3 826.7 533.0 859.5 536.2 859.5C539.5 859.5 541.1 826.7 544.4 826.7C547.6 826.7 549.3 859.5 552.5 859.5H560.7C563.9 859.5 565.6 870.5 568.8 870.5H577.0C580.3 870.5 581.9 848.6 585.1 848.6H593.3C596.6 848.6 598.2 859.5 601.4 859.5C604.7 859.5 606.3 837.6 609.6 837.6C612.9 837.6 614.5 853.0 617.8 859.5C621.0 866.1 622.6 870.5 625.9 870.5H634.1C637.3 870.5 639.0 863.9 642.2 859.5C645.5 855.2 647.1 848.6 650.4 848.6H658.5C661.8 848.6 663.4 859.5 666.7 859.5H674.8C678.1 859.5 679.7 837.6 683.0 837.6C686.2 837.6 687.9 848.6 691.1 848.6C694.4 848.6 696.0 826.7 699.3 826.7C702.5 826.7 704.2 848.6 707.4 848.6C710.7 848.6 712.3 837.6 715.6 837.6C718.9 837.6 720.5 848.6 723.7 848.6H731.9H740.0H748.2C751.5 848.6 753.1 859.5 756.4 859.5H764.5C767.8 859.5 769.4 855.2 772.7 848.6C775.9 842.0 777.6 826.7 780.8 826.7C784.1 826.7 785.7 859.5 789.0 859.5C792.2 859.5 793.9 848.6 797.1 848.6H805.3C808.5 848.6 810.2 859.5 813.4 859.5H821.6H829.7C833.0 859.5 834.6 826.7 837.9 826.7C841.1 826.7 842.8 859.5 846.0 859.5H854.2C857.5 859.5 859.1 848.6 862.3 848.6C865.6 848.6 867.2 859.5 870.5 859.5C873.8 859.5 875.4 848.6 878.7 848.6C881.9 848.6 883.5 859.5 886.8 859.5C890.1 859.5 891.7 848.6 895.0 848.6H903.1C906.4 848.6 908.0 859.5 911.3 859.5C914.5 859.5 916.2 848.6 919.4 848.6C922.7 848.6 924.3 859.5 927.6 859.5C930.8 859.5 932.5 826.7 935.7 826.7C939.0 826.7 940.6 859.5 943.9 859.5H952.0H960.2C963.4 859.5 965.1 848.6 968.3 848.6C971.6 848.6 973.2 870.5 976.5 870.5C979.7 870.5 981.4 859.5 984.6 859.5H992.8C996.1 859.5 997.7 837.6 1000.9 837.6H1009.1H1017.3C1020.5 837.6 1022.1 848.6 1025.4 848.6C1028.7 848.6 1030.3 837.6 1033.6 837.6H1041.7C1045.0 837.6 1046.6 848.6 1049.9 848.6H1058.0H1066.2C1069.4 848.6 1071.1 855.2 1074.3 859.5C1077.6 863.9 1079.2 870.5 1082.5 870.5H1090.6C1093.9 870.5 1095.5 859.5 1098.8 859.5H1106.9C1110.2 859.5 1111.8 837.6 1115.1 837.6C1118.3 837.6 1120.0 848.6 1123.2 848.6H1131.4C1134.7 848.6 1136.3 859.5 1139.5 859.5C1142.8 859.5 1144.4 848.6 1147.7 848.6H1155.9H1164.0H1172.2C1175.4 848.6 1177.1 859.5 1180.3 859.5H1188.5C1191.7 859.5 1193.4 853.0 1196.6 848.6C1199.9 844.2 1201.5 837.6 1204.8 837.6C1208.0 837.6 1209.7 859.5 1212.9 859.5C1216.2 859.5 1217.8 815.7 1221.1 815.7C1224.3 815.7 1226.0 859.5 1229.2 859.5C1232.5 859.5 1234.1 815.7 1237.4 815.7C1240.6 815.7 1242.3 848.6 1245.5 859.5C1248.8 870.5 1250.4 870.5 1253.7 870.5C1257.0 870.5 1258.6 848.6 1261.8 848.6C1265.1 848.6 1266.7 859.5 1270.0 859.5C1273.3 859.5 1274.9 815.7 1278.1 815.7C1281.4 815.7 1283.0 848.6 1286.3 859.5C1289.6 870.5 1291.2 870.5 1294.5 870.5H1302.6C1305.9 870.5 1307.5 859.5 1310.8 859.5C1314.0 859.5 1315.7 870.5 1318.9 870.5C1322.2 870.5 1323.8 837.6 1327.1 837.6C1330.3 837.6 1332.0 859.5 1335.2 859.5H1343.4C1346.6 859.5 1348.3 804.7 1351.5 804.7C1354.8 804.7 1356.4 848.6 1359.7 859.5C1362.9 870.5 1364.6 870.5 1367.8 870.5H1376.0C1379.2 870.5 1380.9 857.3 1384.1 848.6C1387.4 839.8 1389.0 826.7 1392.3 826.7C1395.6 826.7 1397.2 859.5 1400.4 859.5C1403.7 859.5 1405.3 804.7 1408.6 804.7C1411.9 804.7 1413.5 848.6 1416.7 859.5C1420.0 870.5 1421.6 870.5 1424.9 870.5C1428.2 870.5 1429.8 804.7 1433.1 804.7C1436.3 804.7 1437.9 848.6 1441.2 848.6H1449.4H1457.5H1465.7H1473.8C1477.1 848.6 1478.7 859.5 1482.0 859.5H1490.1H1498.3C1501.5 859.5 1503.2 844.2 1506.4 837.6C1509.7 831.0 1511.3 826.7 1514.6 826.7C1517.8 826.7 1519.5 859.5 1522.7 859.5C1526.0 859.5 1527.6 848.6 1530.9 848.6H1539.0C1542.3 848.6 1543.9 870.5 1547.2 870.5C1550.5 870.5 1552.1 859.5 1555.3 859.5H1563.5C1566.8 859.5 1568.4 793.8 1571.7 793.8C1574.9 793.8 1576.5 859.5 1579.8 859.5H1588.0H1596.1C1599.4 859.5 1601.0 870.5 1604.3 870.5C1607.5 870.5 1609.2 837.6 1612.4 837.6C1615.7 837.6 1617.3 859.5 1620.6 859.5H1628.7H1636.9H1645.0H1653.2C1656.4 859.5 1658.1 870.5 1661.3 870.5C1664.6 870.5 1666.2 859.5 1669.5 859.5H1677.6C1680.9 859.5 1685.8 848.6 1685.8 848.6" fill="none" stroke="#e4ee40" stroke-width="2" stroke-linejoin="round" stroke-linecap="round"/>
<path d="M454.7 859.5h0M658.5 859.5h0M772.7 859.5h0M780.8 859.5h0M919.4 859.5h0M935.7 859.5h0M1058.0 859.5h0M1066.2 859.5h0M1131.4 859.5h0M1164.0 859.5h0M1221.1 848.6h0M1237.4 859.5h0M1261.8 859.5h0M1278.1 859.5h0M1327.1 859.5h0M1351.5 859.5h0M1408.6 837.6h0M1433.1 859.5h0M1465.7 859.5h0M1514.6 859.5h0M1539.0 859.5h0" fill="none" stroke="#cfd83a" stroke-width="7.5" stroke-linecap="round"/>
<path d="M340.6 848.6h0M365.0 859.5h0M373.2 848.6h0M381.3 859.5h0M422.1 859.5h0M454.7 848.6h0M471.0 848.6h0M487.3 848.6h0M495.5 837.6h0M503.6 848.6h0M511.8 837.6h0M528.1 826.7h0M544.4 826.7h0M585.1 848.6h0M593.3 848.6h0M601.4 859.5h0M609.6 837.6h0M617.8 859.5h0M650.4 848.6h0M658.5 848.6h0M666.7 859.5h0M674.8 859.5h0M683.0 837.6h0M691.1 848.6h0M699.3 826.7h0M707.4 848.6h0M715.6 837.6h0M723.7 848.6h0M731.9 848.6h0M740.0 848.6h0M748.2 848.6h0M764.5 859.5h0M772.7 848.6h0M780.8 826.7h0M789.0 859.5h0M797.1 848.6h0M805.3 848.6h0M813.4 859.5h0M821.6 859.5h0M829.7 859.5h0M837.9 826.7h0M846.0 859.5h0M862.3 848.6h0M878.7 848.6h0M886.8 859.5h0M895.0 848.6h0M903.1 848.6h0M911.3 859.5h0M919.4 848.6h0M927.6 859.5h0M935.7 826.7h0M960.2 859.5h0M968.3 848.6h0M992.8 859.5h0M1000.9 837.6h0M1009.1 837.6h0M1017.3 837.6h0M1025.4 848.6h0M1033.6 837.6h0M1041.7 837.6h0M1049.9 848.6h0M1058.0 848.6h0M1066.2 848.6h0M1074.3 859.5h0M1106.9 859.5h0M1115.1 837.6h0M1123.2 848.6h0M1131.4 848.6h0M1147.7 848.6h0M1155.9 848.6h0M1164.0 848.6h0M1172.2 848.6h0M1180.3 859.5h0M1188.5 859.5h0M1196.6 848.6h0M1204.8 837.6h0M1212.9 859.5h0M1221.1 815.7h0M1229.2 859.5h0M1237.4 815.7h0M1261.8 848.6h0M1270.0 859.5h0M1278.1 815.7h0M1327.1 837.6h0M1335.2 859.5h0M1343.4 859.5h0M1351.5 804.7h0M1384.1 848.6h0M1392.3 826.7h0M1408.6 804.7h0M1433.1 804.7h0M1441.2 848.6h0M1449.4 848.6h0M1457.5 848.6h0M1465.7 848.6h0M1473.8 848.6h0M1490.1 859.5h0M1498.3 859.5h0M1506.4 837.6h0M1514.6 826.7h0M1522.7 859.5h0M1530.9 848.6h0M1539.0 848.6h0M1555.3 859.5h0M1563.5 859.5h0M1571.7 793.8h0M1596.1 859.5h0M1612.4 837.6h0M1620.6 859.5h0M1628.7 859.5h0M1677.6 859.5h0M1685.8 848.6h0" fill="none" stroke="#e4ee40" stroke-width="7.5" stroke-linecap="round"/>
<path d="M365.0 848.6h0M389.5 859.5h0M552.5 859.5h0M560.7 859.5h0M609.6 859.5h0M756.4 859.5h0M797.1 859.5h0M854.2 859.5h0M943.9 859.5h0M952.0 848.6h0M1000.9 859.5h0M1049.9 859.5h0M1147.7 859.5h0M1204.8 859.5h0M1245.5 859.5h0M1286.3 859.5h0M1343.4 848.6h0M1351.5 848.6h0M1359.7 859.5h0M1400.4 859.5h0M1441.2 859.5h0M1449.4 859.5h0M1457.5 859.5h0M1465.7 837.6h0M1482.0 859.5h0M1506.4 859.5h0M1571.7 859.5h0M1579.8 859.5h0M1588.0 859.5h0M1653.2 859.5h0M1669.5 859.5h0M1685.8 859.5h0" fill="none" stroke="#6b6a18" stroke-width="7.5" stroke-linecap="round"/>
<path d="M365.0 804.7h0M446.5 859.5h0M479.2 859.5h0M487.3 859.5h0M495.5 859.5h0M503.6 859.5h0M511.8 859.5h0M528.1 848.6h0M536.2 859.5h0M585.1 859.5h0M593.3 859.5h0M601.4 848.6h0M642.2 859.5h0M650.4 837.6h0M707.4 859.5h0M723.7 859.5h0M731.9 859.5h0M756.4 837.6h0M764.5 859.5h0M862.3 859.5h0M870.5 859.5h0M903.1 859.5h0M952.0 859.5h0M968.3 859.5h0M984.6 859.5h0M1009.1 848.6h0M1098.8 859.5h0M1123.2 859.5h0M1139.5 859.5h0M1212.9 837.6h0M1221.1 859.5h0M1229.2 782.8h0M1245.5 848.6h0M1278.1 837.6h0M1286.3 848.6h0M1310.8 859.5h0M1327.1 826.7h0M1335.2 848.6h0M1343.4 837.6h0M1351.5 837.6h0M1359.7 848.6h0M1384.1 859.5h0M1392.3 859.5h0M1400.4 848.6h0M1408.6 859.5h0M1416.7 859.5h0M1433.1 848.6h0M1441.2 826.7h0M1449.4 837.6h0M1473.8 859.5h0M1514.6 848.6h0M1530.9 859.5h0M1563.5 848.6h0M1571.7 837.6h0M1588.0 848.6h0M1612.4 859.5h0M1636.9 859.5h0M1645.0 859.5h0M1669.5 848.6h0" fill="none" stroke="#9a9c22" stroke-width="7.5" stroke-linecap="round"/>
<path d="M346.5 868.5h4.4v4h-4.4zM354.7 868.5h4.4v4h-4.4zM395.4 868.5h4.4v4h-4.4zM403.6 868.5h4.4v4h-4.4zM411.7 868.5h4.4v4h-4.4zM428.0 868.5h4.4v4h-4.4zM436.2 868.5h4.4v4h-4.4zM460.6 868.5h4.4v4h-4.4zM517.7 868.5h4.4v4h-4.4zM566.6 868.5h4.4v4h-4.4zM574.8 868.5h4.4v4h-4.4zM623.7 868.5h4.4v4h-4.4zM631.9 868.5h4.4v4h-4.4zM974.3 868.5h4.4v4h-4.4zM1080.3 868.5h4.4v4h-4.4zM1088.4 868.5h4.4v4h-4.4zM1251.5 868.5h4.4v4h-4.4zM1292.3 868.5h4.4v4h-4.4zM1300.4 868.5h4.4v4h-4.4zM1316.7 868.5h4.4v4h-4.4zM1365.6 868.5h4.4v4h-4.4zM1373.8 868.5h4.4v4h-4.4zM1422.7 868.5h4.4v4h-4.4zM1545.0 868.5h4.4v4h-4.4zM1602.1 868.5h4.4v4h-4.4zM1659.1 868.5h4.4v4h-4.4z" fill="#9a9c22" stroke="#9a9c22" stroke-width="3" stroke-linejoin="round"/>
<circle cx="1571.7" cy="596.5" r="4" fill="#19a4e2"/>
</svg>
<div class="abs" style="left:1783px;top:55px;width:17px;height:826px;background:#f1f1f1"></div>
<div class="abs" style="left:1786px;top:71.5px;width:12px;height:422px;background:#c1c1c1"></div>
<div class="abs" style="left:1788px;top:62px;border-left:3.5px solid transparent;border-right:3.5px solid transparent;border-bottom:4px solid #a0a0a0"></div>
<div class="abs" style="left:1788px;top:871px;border-left:3.5px solid transparent;border-right:3.5px solid transparent;border-top:4px solid #505050"></div>
<div class="abs" id="sidebar">
  <div class="abs" style="left:23px;top:38px;color:#fff;font-size:25.5px;line-height:30px;font-weight:bold;white-space:nowrap"><span style="display:inline-block;transform:scaleX(0.976);transform-origin:0 0">Analytics</span></div>
  <div class="hr" style="top:106px"></div>
  <!-- items: top = centerY - 55 - 8 -->
  <!-- Overview 185 -->
  <svg class="ico" style="top:122px" viewBox="0 0 16 16"><g fill="#fff"><rect x="2" y="2" width="5.4" height="7"/><rect x="2" y="10.2" width="5.4" height="3.8"/><rect x="8.6" y="2" width="5.4" height="3.8"/><rect x="8.6" y="7" width="5.4" height="7"/></g></svg>
  <div class="item" style="top:122px"><span style="display:inline-block;transform:scaleX(0.967);transform-origin:0 0">Overview</span></div>
  <!-- Data explorer 229 -->
  <div class="abs" style="left:0;top:152px;width:2px;height:44px;background:#2b8fe8"></div>
  <svg class="ico" style="top:166.7px" viewBox="0 0 16 16"><path d="M9.5 2.8 A5.4 5.4 0 1 1 4.6 3.8" fill="none" stroke="#55a2e0" stroke-width="1.9"/><path d="M5.5 3.2 A5.4 5.4 0 0 1 8.2 2.6" fill="none" stroke="#55a2e0" stroke-width="1.9"/></svg>
  <div class="item" style="top:166px;color:#4c9fe0;-webkit-text-stroke:.2px #4c9fe0"><span style="display:inline-block;transform:scaleX(0.953);transform-origin:0 0">Data explorer</span></div>
  <!-- Funnel 274 -->
  <svg class="ico" style="top:211px" viewBox="0 0 16 16"><g fill="#fff"><rect x="1.4" y="2.6" width="4.6" height="4.2"/><rect x="9.6" y="2.2" width="5" height="4.6"/><rect x="9.6" y="9.4" width="5" height="4.6"/></g><path d="M6 4.6 H9.6 M7.8 4.6 V11.7 H9.6" fill="none" stroke="#fff" stroke-width="1.3"/></svg>
  <div class="item" style="top:211px"><span style="display:inline-block;transform:scaleX(0.948);transform-origin:0 0">Funnel Analyzer</span></div>
  <!-- Segments 319 -->
  <svg class="ico" style="top:256px" viewBox="0 0 16 16"><g fill="#fff"><circle cx="10.2" cy="6.3" r="3.4"/><circle cx="4.2" cy="9.6" r="2.1"/><circle cx="9" cy="12.4" r="1.3"/></g></svg>
  <div class="item" style="top:256px"><span style="display:inline-block;transform:scaleX(0.954);transform-origin:0 0">Segments</span></div>
  <!-- Event Manager 364 -->
  <svg class="ico" style="top:301px" viewBox="0 0 16 16"><rect x="2.2" y="2.4" width="11.6" height="11.2" fill="none" stroke="#fff" stroke-width="1.3"/><g fill="#fff"><rect x="4.3" y="4.8" width="1.6" height="1.5"/><rect x="6.8" y="4.8" width="5" height="1.5"/><rect x="4.3" y="7.3" width="1.6" height="1.5"/><rect x="6.8" y="7.3" width="5" height="1.5"/><rect x="4.3" y="9.8" width="1.6" height="1.5"/><rect x="6.8" y="9.8" width="5" height="1.5"/></g></svg>
  <div class="item" style="top:301px"><span style="display:inline-block;transform:scaleX(0.953);transform-origin:0 0">Event Manager</span></div>
  <!-- Raw Data Export 409 -->
  <svg class="ico" style="top:346px" viewBox="0 0 16 16"><path d="M6.3 2 H9.7 V6.2 H12.6 L8 10.8 L3.4 6.2 H6.3 Z" fill="#fff"/><rect x="3.4" y="12.2" width="9.2" height="1.6" fill="#fff"/></svg>
  <div class="item" style="top:346px"><span style="display:inline-block;transform:scaleX(0.946);transform-origin:0 0">Raw Data Export</span></div>
  <!-- Market Insights 454 -->
  <svg class="ico" style="top:391px" viewBox="0 0 16 16"><rect x="2.2" y="2.6" width="11.6" height="10.8" rx="1" fill="none" stroke="#fff" stroke-width="1.3"/><g fill="#fff"><rect x="4.6" y="7.4" width="1.5" height="4"/><rect x="7.3" y="5" width="1.5" height="6.4"/><rect x="10" y="9" width="1.5" height="2.4"/></g></svg>
  <div class="item" style="top:391px"><span style="display:inline-block;transform:scaleX(0.969);transform-origin:0 0">Market Insights</span></div>
  <!-- A/B Testing 499 -->
  <svg class="ico" style="top:436px" viewBox="0 0 16 16"><path d="M8 13.4 V8.6 L4.2 4.6 M8 8.6 L11.8 4.6" fill="none" stroke="#fff" stroke-width="1.4"/><path d="M2.8 3.2 H6 L2.8 6.4 Z M13.2 3.2 H10 L13.2 6.4 Z" fill="#fff"/></svg>
  <div class="item" style="top:436px"><span style="display:inline-block;transform:scaleX(0.976);transform-origin:0 0">A/B Testing</span></div>
  <!-- Remote Settings 544 -->
  <svg class="ico" style="top:481px" viewBox="0 0 16 16"><rect x="5.4" y="6" width="5.2" height="9.4" rx="1" fill="#fff"/><circle cx="8" cy="12.6" r="1" fill="#222c37"/><path d="M4.2 4.2 Q8 0.9 11.8 4.2" fill="none" stroke="#fff" stroke-width="1.1"/><path d="M5.4 5.4 Q8 3.4 10.6 5.4" fill="none" stroke="#fff" stroke-width="1.1"/></svg>
  <div class="item" style="top:481px"><span style="display:inline-block;transform:scaleX(0.956);transform-origin:0 0">Remote Settings</span></div>
  <!-- Analytics Settings 589 -->
  <svg class="ico" style="top:526px" viewBox="0 0 16 16"><g transform="translate(8 8)"><g fill="#fff"><circle r="4.6"/><rect x="-1.5" y="-6.6" width="3" height="13.2" rx=".5"/><rect x="-1.5" y="-6.6" width="3" height="13.2" rx=".5" transform="rotate(60)"/><rect x="-1.5" y="-6.6" width="3" height="13.2" rx=".5" transform="rotate(120)"/></g><circle r="2" fill="#222c37"/></g></svg>
  <div class="item" style="top:526px"><span style="display:inline-block;transform:scaleX(0.971);transform-origin:0 0">Analytics Settings</span></div>
  <div class="hr" style="top:780px"></div>
  <!-- About 858 -->
  <svg class="ico" style="top:795px" viewBox="0 0 16 16"><circle cx="8" cy="8" r="6.4" fill="#fff"/><rect x="7.1" y="6.9" width="1.9" height="4.6" fill="#222c37"/><rect x="7.1" y="4.2" width="1.9" height="1.8" fill="#222c37"/></svg>
  <div class="item" style="top:795px"><span style="display:inline-block;transform:scaleX(0.966);transform-origin:0 0">About &amp; Support</span></div>
</div>

<div class="abs" id="topstrip"></div>
<div class="abs" id="header">
  <!-- hamburger -->
  <svg class="abs" style="left:19px;top:20px" width="17" height="13" viewBox="0 0 17 13"><rect x="0" y="0.2" width="17" height="2" fill="#fff"/><rect x="0" y="5.2" width="17" height="2" fill="#fff"/><rect x="0" y="10.2" width="17" height="2" fill="#fff"/></svg>
  <!-- unity logo -->
  <svg class="abs" style="left:54px;top:12px" width="27" height="28" viewBox="0 0 28 28" preserveAspectRatio="none">
    <g fill="none" stroke="#fff" stroke-width="2.8" stroke-linejoin="round" stroke-linecap="round">
      <path d="M1.9 14 L13.4 4.6 L23.2 2.7 Q25.6 14 23 25.4 L13.4 23.5 Z"/>
      <path d="M1.9 14 H17 M17 14 L23 3 M17 14 L22.8 25.2"/>
    </g>
  </svg>
  <div class="t" style="left:83.3px;top:12.6px;font-size:19.4px;line-height:26px;font-weight:bold"><span style="display:inline-block;transform:scaleX(0.835);transform-origin:0 0">unity</span></div>
  <div class="t" style="left:126.8px;top:12.6px;font-size:19.4px;line-height:26px;"><span style="display:inline-block;transform:scaleX(1.039);transform-origin:0 0">Dashboard</span></div>
  <!-- project icon -->
  <div class="abs" style="left:253px;top:9px;width:34px;height:34px;border-radius:6px;background:linear-gradient(45deg,#1c6fcb 10%,#2b8f9a 55%,#46a035 95%)">
    <svg class="abs" style="left:10px;top:10px" width="14" height="14" viewBox="0 0 14 14"><path d="M7 0.8 L12.6 3.6 L12.6 10.2 L7 13.2 L1.4 10.2 L1.4 3.6 Z" fill="#fff"/><path d="M2.6 4.6 L6.2 6.4 L6.2 11.4 L2.6 9.5 Z" fill="#2a8aa8"/></svg>
  </div>
  <div class="t" style="left:298px;top:17px;font-size:16px;line-height:20px;font-weight:bold;"><span style="display:inline-block;transform:scaleX(0.929);transform-origin:0 0">Graph-iTOUCH Distri...</span></div>
  <div class="abs" style="left:485px;top:24px;border-left:4.5px solid transparent;border-right:4.5px solid transparent;border-top:5px solid #9a9a9a"></div>
  <!-- create project -->
  <div class="abs" style="left:1320px;top:12px;width:126px;height:28px;border-radius:4px;background:#434343"></div>
  <div class="t" style="left:1329px;top:18px;font-size:13.2px;line-height:16px;font-weight:bold;letter-spacing:-.3px">Create project</div>
  <svg class="abs" style="left:1423px;top:18px" width="14" height="16" viewBox="0 0 14 16"><path d="M7 1 L12.8 4 L12.8 11.6 L7 15 L1.2 11.6 L1.2 4 Z" fill="#fff"/><path d="M2.6 5 L6.3 7 L6.3 13 L2.6 10.9 Z" fill="#434343"/></svg>
  <!-- chat -->
  <svg class="abs" style="left:1470px;top:16px" width="19" height="20" viewBox="0 0 19 20"><path d="M2.5 1 H16.5 Q18 1 18 2.5 V19 L14.5 16.6 H2.5 Q1 16.6 1 15.1 V2.5 Q1 1 2.5 1 Z" fill="#fff"/><path d="M4.6 11.2 Q9.5 14.6 14.4 11.2" fill="none" stroke="#000" stroke-width="1.5" stroke-linecap="round"/></svg>
  <!-- help -->
  <svg class="abs" style="left:1522px;top:16px" width="18" height="20" viewBox="0 0 18 20"><path d="M9 1 A8 8 0 1 1 6.2 16.5 L9.6 19.6 L9.6 17 A8 8 0 0 0 9 1 Z" fill="#fff"/><circle cx="9" cy="9" r="8" fill="#fff"/><path d="M6.3 7.2 Q6.4 4.4 9 4.4 Q11.7 4.4 11.7 6.9 Q11.7 8.4 10.2 9.2 Q9.1 9.9 9.1 11.2" fill="none" stroke="#000" stroke-width="1.9"/><circle cx="9.1" cy="13.7" r="1.2" fill="#000"/></svg>
  <!-- grid -->
  <svg class="abs" style="left:1577px;top:18px" width="16" height="16" viewBox="0 0 16 16"><g fill="#fff"><rect x="0" y="0.3" width="4" height="4"/><rect x="5.7" y="0.3" width="4" height="4"/><rect x="11.4" y="0.3" width="4" height="4"/><rect x="0" y="6" width="4" height="4"/><rect x="5.7" y="6" width="4" height="4"/><rect x="11.4" y="6" width="4" height="4"/><rect x="0" y="11.7" width="4" height="4"/><rect x="5.7" y="11.7" width="4" height="4"/><rect x="11.4" y="11.7" width="4" height="4"/></g></svg>
  <div class="abs" style="left:1611px;top:0;width:1px;height:52px;background:#3a3a3a"></div>
  <!-- avatar -->
  <div class="abs" style="left:1626.5px;top:13px;width:26.5px;height:26.5px;border-radius:50%;background:#2b8fe8"></div>
  <div class="t" style="left:1630.5px;top:17px;font-size:15.5px;line-height:19px;font-weight:bold;letter-spacing:-.6px">FL</div>
  <div class="t" style="left:1660.3px;top:12.8px;font-size:13.6px;line-height:16px;font-weight:bold"><span style="display:inline-block;transform:scaleX(0.942);transform-origin:0 0">Francis Lessard</span></div>
  <div class="t" style="left:1660px;top:27px;font-size:11.8px;line-height:14px;color:#b5b5b5"><span style="display:inline-block;transform:scaleX(0.989);transform-origin:0 0">Francis Lessard</span></div>
  <div class="abs" style="left:1776px;top:25.5px;border-left:3px solid transparent;border-right:3px solid transparent;border-top:3px solid #ddd"></div>
</div>

</body>
</html>
